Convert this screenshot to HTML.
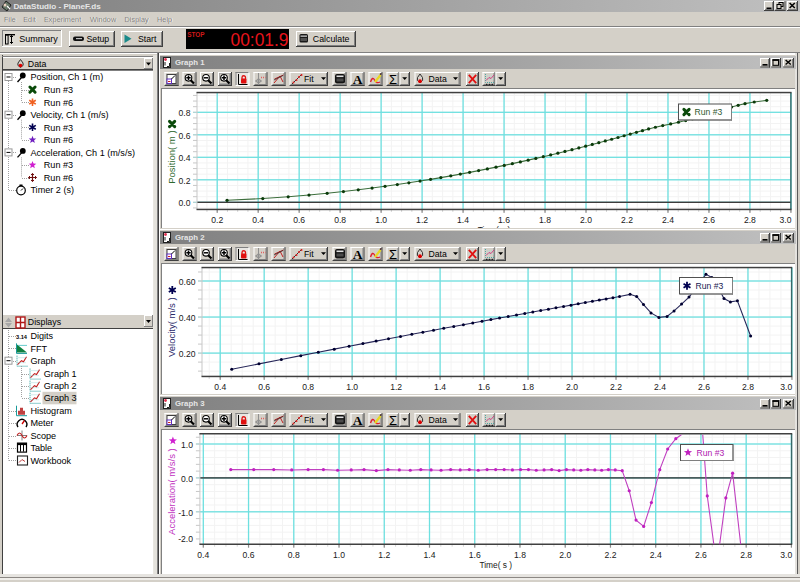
<!DOCTYPE html><html><head><meta charset="utf-8"><style>html,body{margin:0;padding:0;width:800px;height:582px;overflow:hidden;background:#d4d0c8}</style></head><body><svg width="800" height="582" viewBox="0 0 800 582" style="position:absolute;left:0;top:0;font-family:'Liberation Sans', sans-serif">
<defs>
<linearGradient id="tg" x1="0" y1="0" x2="1" y2="0"><stop offset="0" stop-color="#808080"/><stop offset="1" stop-color="#c0c0c0"/></linearGradient>
<linearGradient id="tg2" x1="0" y1="0" x2="1" y2="0"><stop offset="0" stop-color="#808080"/><stop offset="1" stop-color="#c0c0c0"/></linearGradient>
</defs>
<rect x="0" y="0" width="800" height="582" fill="#d4d0c8" />
<rect x="0" y="0" width="800" height="12" fill="url(#tg)" />
<text x="13.5" y="9" font-size="8.1" fill="#e6e6e6" font-weight="700" text-anchor="start" >DataStudio - PlaneF.ds</text>
<g transform="translate(1,0)"><path d="M5 1 L10 5 L6 11 L1 7 Z" fill="#6a7a6a" stroke="#202020" stroke-width="1"/><circle cx="4" cy="5" r="1.5" fill="#e8d0c0"/><path d="M6 6 L9 9" stroke="#ffffff" stroke-width="1.2"/></g>
<rect x="764" y="1" width="10" height="10" fill="#d4d0c8" />
<rect x="764" y="1" width="10" height="1" fill="#ffffff"/>
<rect x="764" y="1" width="1" height="10" fill="#ffffff"/>
<rect x="764" y="10" width="10" height="1" fill="#404040"/>
<rect x="773" y="1" width="1" height="10" fill="#404040"/>
<rect x="765" y="9" width="8" height="1" fill="#808080"/>
<rect x="772" y="2" width="1" height="8" fill="#808080"/>
<rect x="766.5" y="7.5" width="5" height="1.6" fill="#000" />
<rect x="774.5" y="1" width="11" height="10" fill="#d4d0c8" />
<rect x="774.5" y="1" width="11.0" height="1" fill="#ffffff"/>
<rect x="774.5" y="1" width="1" height="10" fill="#ffffff"/>
<rect x="774.5" y="10" width="11.0" height="1" fill="#404040"/>
<rect x="784.5" y="1" width="1" height="10" fill="#404040"/>
<rect x="775.5" y="9" width="9.0" height="1" fill="#808080"/>
<rect x="783.5" y="2" width="1" height="8" fill="#808080"/>
<rect x="779.0" y="2.5" width="4" height="4" fill="none" stroke="#000" stroke-width="1"/>
<rect x="777.0" y="4.5" width="4" height="4" fill="#d4d0c8" stroke="#000" stroke-width="1"/>
<rect x="787" y="1" width="11" height="10" fill="#d4d0c8" />
<rect x="787" y="1" width="11" height="1" fill="#ffffff"/>
<rect x="787" y="1" width="1" height="10" fill="#ffffff"/>
<rect x="787" y="10" width="11" height="1" fill="#404040"/>
<rect x="797" y="1" width="1" height="10" fill="#404040"/>
<rect x="788" y="9" width="9" height="1" fill="#808080"/>
<rect x="796" y="2" width="1" height="8" fill="#808080"/>
<path d="M789.6 3 L794.8 8 M794.8 3 L789.6 8" stroke="#000" stroke-width="1.5"/>
<text x="4.6" y="22.4" font-size="7.4" fill="#ffffff" font-weight="400" text-anchor="start" >File</text>
<text x="4" y="21.8" font-size="7.4" fill="#7e7c78" font-weight="400" text-anchor="start" >File</text>
<text x="23.8" y="22.4" font-size="7.4" fill="#ffffff" font-weight="400" text-anchor="start" >Edit</text>
<text x="23.2" y="21.8" font-size="7.4" fill="#7e7c78" font-weight="400" text-anchor="start" >Edit</text>
<text x="44.5" y="22.4" font-size="7.4" fill="#ffffff" font-weight="400" text-anchor="start" >Experiment</text>
<text x="43.9" y="21.8" font-size="7.4" fill="#7e7c78" font-weight="400" text-anchor="start" >Experiment</text>
<text x="90.6" y="22.4" font-size="7.4" fill="#ffffff" font-weight="400" text-anchor="start" >Window</text>
<text x="90" y="21.8" font-size="7.4" fill="#7e7c78" font-weight="400" text-anchor="start" >Window</text>
<text x="125.1" y="22.4" font-size="7.4" fill="#ffffff" font-weight="400" text-anchor="start" >Display</text>
<text x="124.5" y="21.8" font-size="7.4" fill="#7e7c78" font-weight="400" text-anchor="start" >Display</text>
<text x="157.6" y="22.4" font-size="7.4" fill="#ffffff" font-weight="400" text-anchor="start" >Help</text>
<text x="157" y="21.8" font-size="7.4" fill="#7e7c78" font-weight="400" text-anchor="start" >Help</text>
<rect x="0" y="26" width="800" height="1" fill="#808080"/>
<rect x="0" y="27" width="800" height="1" fill="#ffffff"/>
<rect x="2" y="30" width="60" height="17" fill="#dedbd4" />
<rect x="2" y="30" width="60" height="1" fill="#808080"/>
<rect x="2" y="30" width="1" height="17" fill="#808080"/>
<rect x="2" y="46" width="60" height="1" fill="#ffffff"/>
<rect x="61" y="30" width="1" height="17" fill="#ffffff"/>
<rect x="3" y="31" width="58" height="0.0" fill="#404040"/>
<g><rect x="5" y="34" width="10" height="1.4" fill="#000"/><rect x="5.5" y="35" width="2.6" height="9" fill="none" stroke="#000" stroke-width="1"/><path d="M11.5 35.5 V43.5 M10 37 L11.5 35.5 L13 37 M10 42 L11.5 43.5 L13 42" stroke="#000" stroke-width="1" fill="none"/></g>
<text x="19.3" y="42.2" font-size="9" fill="#000" font-weight="400" text-anchor="start" >Summary</text>
<rect x="69" y="31" width="46" height="16" fill="#d4d0c8" />
<rect x="69" y="31" width="46" height="1" fill="#ffffff"/>
<rect x="69" y="31" width="1" height="16" fill="#ffffff"/>
<rect x="69" y="46" width="46" height="1" fill="#404040"/>
<rect x="114" y="31" width="1" height="16" fill="#404040"/>
<rect x="70" y="45" width="44" height="1" fill="#808080"/>
<rect x="113" y="32" width="1" height="14" fill="#808080"/>
<rect x="73" y="36.5" width="11" height="4.5" rx="2" fill="#101010"/><rect x="76" y="38" width="6" height="1.2" fill="#c0c0c0"/>
<text x="86.5" y="42" font-size="8.7" fill="#000" font-weight="400" text-anchor="start" >Setup</text>
<rect x="121" y="31" width="42" height="16" fill="#d4d0c8" />
<rect x="121" y="31" width="42" height="1" fill="#ffffff"/>
<rect x="121" y="31" width="1" height="16" fill="#ffffff"/>
<rect x="121" y="46" width="42" height="1" fill="#404040"/>
<rect x="162" y="31" width="1" height="16" fill="#404040"/>
<rect x="122" y="45" width="40" height="1" fill="#808080"/>
<rect x="161" y="32" width="1" height="14" fill="#808080"/>
<path d="M124.5 34.5 L131.5 38.8 L124.5 43 Z" fill="#1a8a8a"/>
<text x="138" y="42" font-size="8.7" fill="#000" font-weight="400" text-anchor="start" >Start</text>
<rect x="186" y="29" width="103" height="20" fill="#000000" />
<text x="187.3" y="37.3" font-size="6.4" fill="#d01818" font-weight="700" text-anchor="start" >STOP</text>
<text x="288.5" y="46" font-size="19" fill="#e8141c" font-weight="400" text-anchor="end" transform="" textLength="58" lengthAdjust="spacingAndGlyphs">00:01.9</text>
<rect x="296" y="31" width="60" height="16" fill="#d4d0c8" />
<rect x="296" y="31" width="60" height="1" fill="#ffffff"/>
<rect x="296" y="31" width="1" height="16" fill="#ffffff"/>
<rect x="296" y="46" width="60" height="1" fill="#404040"/>
<rect x="355" y="31" width="1" height="16" fill="#404040"/>
<rect x="297" y="45" width="58" height="1" fill="#808080"/>
<rect x="354" y="32" width="1" height="14" fill="#808080"/>
<rect x="299.5" y="34" width="8.5" height="8.5" rx="1.5" fill="#181818"/><rect x="300.5" y="35.5" width="6.5" height="1.3" fill="#c8c8c8"/><rect x="300.5" y="38" width="6.5" height="3" fill="#505050"/>
<text x="312.8" y="42" font-size="8.8" fill="#000" font-weight="400" text-anchor="start" >Calculate</text>
<rect x="0" y="52" width="800" height="1" fill="#808080"/>
<rect x="0" y="53" width="800" height="1" fill="#ffffff"/>
<rect x="2" y="55" width="1" height="523" fill="#404040"/>
<rect x="2" y="56" width="155" height="1" fill="#808080"/>
<rect x="3" y="57" width="150" height="13" fill="#d4d0c8" />
<rect x="3" y="57" width="150" height="1" fill="#ffffff"/>
<rect x="3" y="69" width="150" height="1" fill="#404040"/>
<rect x="3" y="70" width="150" height="1" fill="#808080"/>
<rect x="144" y="58" width="9" height="11" fill="#d4d0c8" />
<rect x="144" y="58" width="9" height="1" fill="#ffffff"/>
<rect x="144" y="58" width="1" height="11" fill="#ffffff"/>
<rect x="144" y="68" width="9" height="1" fill="#808080"/>
<rect x="152" y="58" width="1" height="11" fill="#808080"/>
<path d="M146 62.5 L151 62.5 L148.5 65.5 Z" fill="#000"/>
<path d="M20.5 59.5 L23 63 Q24.5 65.5 20.5 67.5 Q16.5 65.5 18 63 Z" fill="none" stroke="#303030" stroke-width="1"/><circle cx="20.5" cy="65.5" r="1.8" fill="#e00000"/>
<text x="27.8" y="67" font-size="8.8" fill="#000" font-weight="400" text-anchor="start" >Data</text>
<rect x="3" y="71" width="150" height="243" fill="#ffffff" />
<rect x="3" y="314" width="150" height="14" fill="#d4d0c8" />
<rect x="3" y="314" width="150" height="1" fill="#ffffff"/>
<rect x="3" y="328" width="150" height="1" fill="#404040"/>
<rect x="144" y="315" width="9" height="12" fill="#d4d0c8" />
<rect x="144" y="315" width="9" height="1" fill="#ffffff"/>
<rect x="144" y="315" width="1" height="12" fill="#ffffff"/>
<rect x="144" y="326" width="9" height="1" fill="#808080"/>
<rect x="152" y="315" width="1" height="12" fill="#808080"/>
<path d="M146 320 L151 320 L148.5 323 Z" fill="#000"/>
<path d="M5 322 L8.5 317.5 L12 322 Z M5 323 L8.5 327.5 L12 323 Z" fill="#a8a8a8"/>
<rect x="16" y="317" width="9" height="11" fill="#fff" stroke="#b01818" stroke-width="1.4"/><path d="M20.5 317 V328 M16 322.5 H25" stroke="#b01818" stroke-width="1.4"/>
<text x="27.8" y="325.2" font-size="8.8" fill="#000" font-weight="400" text-anchor="start" >Displays</text>
<rect x="3" y="329" width="150" height="245" fill="#ffffff" />
<rect x="153" y="55" width="4" height="523" fill="#e4e2dc" />
<rect x="0" y="574" width="157" height="1" fill="#d4d0c8"/>
<rect x="0" y="574" width="157" height="4" fill="#d4d0c8" />
<rect x="153" y="57" width="1" height="517" fill="#e8e6e0"/>
<rect x="2" y="577" width="155" height="1" fill="#808080"/>
<line x1="8.5" y1="77" x2="8.5" y2="190" stroke="#a0a0a0" stroke-width="1" stroke-dasharray="1 1"/>
<line x1="9" y1="77.5" x2="17" y2="77.5" stroke="#a0a0a0" stroke-width="1" stroke-dasharray="1 1"/>
<rect x="5.0" y="73.5" width="7" height="7" fill="#fff" stroke="#9a9a9a" stroke-width="1"/>
<rect x="6.5" y="76.5" width="4" height="1" fill="#000"/>
<path d="M17.5 82 L21.5 77.5" stroke="#000" stroke-width="1.3"/><circle cx="22.8" cy="75.5" r="2.9" fill="#000"/>
<text x="30.4" y="80.3" font-size="9.1" fill="#000" font-weight="400" text-anchor="start" >Position, Ch 1 (m)</text>
<line x1="21.5" y1="82" x2="21.5" y2="102.2" stroke="#a0a0a0" stroke-width="1" stroke-dasharray="1 1"/>
<line x1="22" y1="90.5" x2="29" y2="90.5" stroke="#a0a0a0" stroke-width="1" stroke-dasharray="1 1"/>
<path d="M29.9 87.0 L35.1 92.19999999999999 M35.1 87.0 L29.9 92.19999999999999" stroke="#0a4a0a" stroke-width="3" stroke-linecap="round"/>
<text x="43.8" y="92.89999999999999" font-size="9.1" fill="#000" font-weight="400" text-anchor="start" >Run #3</text>
<line x1="22" y1="102.5" x2="29" y2="102.5" stroke="#a0a0a0" stroke-width="1" stroke-dasharray="1 1"/>
<path d="M32.5 98.4 V106.0 M29.2 100.3 L35.8 104.10000000000001 M35.8 100.3 L29.2 104.10000000000001" stroke="#f06020" stroke-width="1.6"/>
<text x="43.8" y="105.5" font-size="9.1" fill="#000" font-weight="400" text-anchor="start" >Run #6</text>
<line x1="9" y1="115.5" x2="17" y2="115.5" stroke="#a0a0a0" stroke-width="1" stroke-dasharray="1 1"/>
<rect x="5.0" y="111.2" width="7" height="7" fill="#fff" stroke="#9a9a9a" stroke-width="1"/>
<rect x="6.5" y="114.2" width="4" height="1" fill="#000"/>
<path d="M17.5 119.7 L21.5 115.2" stroke="#000" stroke-width="1.3"/><circle cx="22.8" cy="113.2" r="2.9" fill="#000"/>
<text x="30.4" y="118.0" font-size="9.1" fill="#000" font-weight="400" text-anchor="start" >Velocity, Ch 1 (m/s)</text>
<line x1="21.5" y1="119.7" x2="21.5" y2="139.8" stroke="#a0a0a0" stroke-width="1" stroke-dasharray="1 1"/>
<line x1="22" y1="127.5" x2="29" y2="127.5" stroke="#a0a0a0" stroke-width="1" stroke-dasharray="1 1"/>
<path d="M32.5 123.5 V131.1 M29.2 125.39999999999999 L35.8 129.2 M35.8 125.39999999999999 L29.2 129.2" stroke="#000050" stroke-width="1.6"/>
<text x="43.8" y="130.6" font-size="9.1" fill="#000" font-weight="400" text-anchor="start" >Run #3</text>
<line x1="22" y1="140.5" x2="29" y2="140.5" stroke="#a0a0a0" stroke-width="1" stroke-dasharray="1 1"/>
<polygon points="32.50,135.80 33.50,138.42 36.30,138.56 34.12,140.33 34.85,143.04 32.50,141.50 30.15,143.04 30.88,140.33 28.70,138.56 31.50,138.42" fill="#7020c0"/>
<text x="43.8" y="143.10000000000002" font-size="9.1" fill="#000" font-weight="400" text-anchor="start" >Run #6</text>
<line x1="9" y1="152.5" x2="17" y2="152.5" stroke="#a0a0a0" stroke-width="1" stroke-dasharray="1 1"/>
<rect x="5.0" y="148.9" width="7" height="7" fill="#fff" stroke="#9a9a9a" stroke-width="1"/>
<rect x="6.5" y="151.9" width="4" height="1" fill="#000"/>
<path d="M17.5 157.4 L21.5 152.9" stroke="#000" stroke-width="1.3"/><circle cx="22.8" cy="150.9" r="2.9" fill="#000"/>
<text x="30.4" y="155.70000000000002" font-size="9.1" fill="#000" font-weight="400" text-anchor="start" >Acceleration, Ch 1 (m/s/s)</text>
<line x1="21.5" y1="157.4" x2="21.5" y2="177.5" stroke="#a0a0a0" stroke-width="1" stroke-dasharray="1 1"/>
<line x1="22" y1="165.5" x2="29" y2="165.5" stroke="#a0a0a0" stroke-width="1" stroke-dasharray="1 1"/>
<polygon points="32.50,161.00 33.50,163.62 36.30,163.76 34.12,165.53 34.85,168.24 32.50,166.70 30.15,168.24 30.88,165.53 28.70,163.76 31.50,163.62" fill="#d020d0"/>
<text x="43.8" y="168.3" font-size="9.1" fill="#000" font-weight="400" text-anchor="start" >Run #3</text>
<line x1="22" y1="178.5" x2="29" y2="178.5" stroke="#a0a0a0" stroke-width="1" stroke-dasharray="1 1"/>
<path d="M32.5 173.5 V181.5 M28.5 177.5 H36.5" stroke="#701010" stroke-width="1.2"/><path d="M31.0 175.0 L32.5 173.5 L34.0 175.0 M31.0 180.0 L32.5 181.5 L34.0 180.0 M30.0 176.0 L28.5 177.5 L30.0 179.0 M35.0 176.0 L36.5 177.5 L35.0 179.0" stroke="#701010" stroke-width="1" fill="none"/>
<text x="43.8" y="180.8" font-size="9.1" fill="#000" font-weight="400" text-anchor="start" >Run #6</text>
<line x1="9" y1="190.5" x2="17" y2="190.5" stroke="#a0a0a0" stroke-width="1" stroke-dasharray="1 1"/>
<circle cx="21" cy="190.5" r="4.3" fill="#fff" stroke="#000" stroke-width="1.2"/><path d="M21 190.5 L23 188.5" stroke="#000" stroke-width="1"/><rect x="19.5" y="184.5" width="3" height="1.5" fill="#000"/>
<text x="30.4" y="193.3" font-size="9.1" fill="#000" font-weight="400" text-anchor="start" >Timer 2 (s)</text>
<line x1="8.5" y1="330" x2="8.5" y2="460.5" stroke="#a0a0a0" stroke-width="1" stroke-dasharray="1 1"/>
<line x1="9" y1="336.5" x2="16" y2="336.5" stroke="#a0a0a0" stroke-width="1" stroke-dasharray="1 1"/>
<text x="16" y="338.5" font-size="6" fill="#000" font-weight="700" text-anchor="start" textLength="11" lengthAdjust="spacingAndGlyphs">3.14</text>
<text x="30.4" y="339.3" font-size="9.1" fill="#000" font-weight="400" text-anchor="start" >Digits</text>
<line x1="9" y1="348.5" x2="16" y2="348.5" stroke="#a0a0a0" stroke-width="1" stroke-dasharray="1 1"/>
<path d="M17 344.4 L27 352.4 L17 352.4 Z" fill="#108040"/><path d="M16.5 343.4 V353.4 H27" stroke="#1a9a9a" stroke-width="1" fill="none"/><path d="M18 345.4 H27" stroke="#40c0c0" stroke-width="0.8"/>
<text x="30.4" y="351.7" font-size="9.1" fill="#000" font-weight="400" text-anchor="start" >FFT</text>
<line x1="9" y1="361.5" x2="16" y2="361.5" stroke="#a0a0a0" stroke-width="1" stroke-dasharray="1 1"/>
<rect x="5.0" y="357.2" width="7" height="7" fill="#fff" stroke="#9a9a9a" stroke-width="1"/>
<rect x="6.5" y="360.2" width="4" height="1" fill="#000"/>
<path d="M17.0 355.7 V366.2 H27.5" stroke="#1a9a9a" stroke-width="1" fill="none" stroke-dasharray="1 1"/><path d="M17.5 364.7 L21.5 360.7 L23.5 361.7 L26.5 356.7" stroke="#c02020" stroke-width="1.1" fill="none"/><path d="M18.5 357.7 H26.5 M18.5 362.7 H26.5" stroke="#90d0d0" stroke-width="0.8" stroke-dasharray="1 1"/>
<text x="30.4" y="364.0" font-size="9.1" fill="#000" font-weight="400" text-anchor="start" >Graph</text>
<line x1="22" y1="374.5" x2="29" y2="374.5" stroke="#a0a0a0" stroke-width="1" stroke-dasharray="1 1"/>
<path d="M30.0 368.6 V379.1 H40.5" stroke="#1a9a9a" stroke-width="1" fill="none" stroke-dasharray="1 1"/><path d="M30.5 377.6 L34.5 373.6 L36.5 374.6 L39.5 369.6" stroke="#c02020" stroke-width="1.1" fill="none"/><path d="M31.5 370.6 H39.5 M31.5 375.6 H39.5" stroke="#90d0d0" stroke-width="0.8" stroke-dasharray="1 1"/>
<text x="43.8" y="376.90000000000003" font-size="9.1" fill="#000" font-weight="400" text-anchor="start" >Graph 1</text>
<line x1="22" y1="386.5" x2="29" y2="386.5" stroke="#a0a0a0" stroke-width="1" stroke-dasharray="1 1"/>
<path d="M30.0 380.7 V391.2 H40.5" stroke="#1a9a9a" stroke-width="1" fill="none" stroke-dasharray="1 1"/><path d="M30.5 389.7 L34.5 385.7 L36.5 386.7 L39.5 381.7" stroke="#c02020" stroke-width="1.1" fill="none"/><path d="M31.5 382.7 H39.5 M31.5 387.7 H39.5" stroke="#90d0d0" stroke-width="0.8" stroke-dasharray="1 1"/>
<text x="43.8" y="389.0" font-size="9.1" fill="#000" font-weight="400" text-anchor="start" >Graph 2</text>
<line x1="22" y1="398.5" x2="29" y2="398.5" stroke="#a0a0a0" stroke-width="1" stroke-dasharray="1 1"/>
<rect x="42.5" y="391.8" width="34" height="12.5" fill="#d4d0c8" />
<path d="M30.0 392.8 V403.3 H40.5" stroke="#1a9a9a" stroke-width="1" fill="none" stroke-dasharray="1 1"/><path d="M30.5 401.8 L34.5 397.8 L36.5 398.8 L39.5 393.8" stroke="#c02020" stroke-width="1.1" fill="none"/><path d="M31.5 394.8 H39.5 M31.5 399.8 H39.5" stroke="#90d0d0" stroke-width="0.8" stroke-dasharray="1 1"/>
<text x="43.8" y="401.1" font-size="9.1" fill="#000" font-weight="400" text-anchor="start" >Graph 3</text>
<line x1="9" y1="411.5" x2="16" y2="411.5" stroke="#a0a0a0" stroke-width="1" stroke-dasharray="1 1"/>
<path d="M18 414.7 V410.7 H20 V407.7 H23 V410.7 H25 V414.7 Z" fill="#c04040"/><path d="M16.5 405.7 V415.7 H27" stroke="#1a9a9a" stroke-width="1" fill="none"/>
<text x="30.4" y="414.0" font-size="9.1" fill="#000" font-weight="400" text-anchor="start" >Histogram</text>
<line x1="9" y1="423.5" x2="16" y2="423.5" stroke="#a0a0a0" stroke-width="1" stroke-dasharray="1 1"/>
<path d="M18 427 A4.8 4.8 0 1 1 26 427" stroke="#000" stroke-width="1.4" fill="none"/><path d="M22 424 L24.5 420.5" stroke="#d00000" stroke-width="1.3"/>
<text x="30.4" y="426.3" font-size="9.1" fill="#000" font-weight="400" text-anchor="start" >Meter</text>
<line x1="9" y1="436.5" x2="16" y2="436.5" stroke="#a0a0a0" stroke-width="1" stroke-dasharray="1 1"/>
<path d="M22 430.5 V440.5 M17 435.5 H27" stroke="#808080" stroke-width="1"/><path d="M17 435.5 Q19.5 430.5 22 435.5 T27 435.5" stroke="#c02020" stroke-width="1.2" fill="none"/>
<text x="30.4" y="438.8" font-size="9.1" fill="#000" font-weight="400" text-anchor="start" >Scope</text>
<line x1="9" y1="448.5" x2="16" y2="448.5" stroke="#a0a0a0" stroke-width="1" stroke-dasharray="1 1"/>
<rect x="17.5" y="443.1" width="9" height="9" fill="#fff" stroke="#000" stroke-width="1.2"/><path d="M20.5 443.6 V451.6 M23.5 443.6 V451.6" stroke="#000" stroke-width="1"/><rect x="17.5" y="443.1" width="9" height="2" fill="#000"/>
<text x="30.4" y="450.90000000000003" font-size="9.1" fill="#000" font-weight="400" text-anchor="start" >Table</text>
<line x1="9" y1="460.5" x2="16" y2="460.5" stroke="#a0a0a0" stroke-width="1" stroke-dasharray="1 1"/>
<rect x="17.5" y="456.0" width="10" height="9" fill="#fff" stroke="#202020" stroke-width="1.1"/><path d="M19 462.5 L22 459.5 L25 461.5" stroke="#c04040" stroke-width="1" fill="none"/>
<text x="30.4" y="463.8" font-size="9.1" fill="#000" font-weight="400" text-anchor="start" >Workbook</text>
<line x1="21.5" y1="366" x2="21.5" y2="397.8" stroke="#a0a0a0" stroke-width="1" stroke-dasharray="1 1"/>
<rect x="157" y="53" width="1" height="178" fill="#808080"/>
<rect x="158" y="53" width="1" height="178" fill="#404040"/>
<rect x="159" y="53" width="1" height="178" fill="#ffffff"/>
<rect x="159" y="54" width="638" height="1" fill="#ffffff"/>
<rect x="797" y="53" width="1" height="178" fill="#5a5a5a"/>
<rect x="795" y="53" width="2" height="178" fill="#e4e2de"/>
<rect x="798" y="53" width="2" height="178" fill="#d4d0c8" />
<rect x="160" y="56" width="636" height="13" fill="url(#tg)" />
<text x="175" y="65.2" font-size="7.8" fill="#e6e6e6" font-weight="700" text-anchor="start" >Graph 1</text>
<rect x="163.5" y="57.5" width="7" height="10" fill="#fff" stroke="#202020" stroke-width="1"/><circle cx="165.5" cy="59.5" r="1.4" fill="#e03050"/><path d="M165 65.5 V62 M167 66.5 H169.5 V63" stroke="#202020" stroke-width="1" fill="none"/>
<rect x="760" y="58" width="10" height="9.5" fill="#d4d0c8" />
<rect x="760" y="58" width="10" height="1" fill="#ffffff"/>
<rect x="760" y="58" width="1" height="9.5" fill="#ffffff"/>
<rect x="760" y="66.5" width="10" height="1" fill="#404040"/>
<rect x="769" y="58" width="1" height="9.5" fill="#404040"/>
<rect x="761" y="65.5" width="8" height="1" fill="#808080"/>
<rect x="768" y="59" width="1" height="7.5" fill="#808080"/>
<rect x="762.5" y="64.0" width="5" height="1.6" fill="#000" />
<rect x="771" y="58" width="10" height="9.5" fill="#d4d0c8" />
<rect x="771" y="58" width="10" height="1" fill="#ffffff"/>
<rect x="771" y="58" width="1" height="9.5" fill="#ffffff"/>
<rect x="771" y="66.5" width="10" height="1" fill="#404040"/>
<rect x="780" y="58" width="1" height="9.5" fill="#404040"/>
<rect x="772" y="65.5" width="8" height="1" fill="#808080"/>
<rect x="779" y="59" width="1" height="7.5" fill="#808080"/>
<rect x="773" y="59.8" width="5.5" height="5.5" fill="none" stroke="#000" stroke-width="1"/>
<rect x="772.5" y="59.3" width="6.5" height="1.6" fill="#000"/>
<rect x="783" y="58" width="11" height="9.5" fill="#d4d0c8" />
<rect x="783" y="58" width="11" height="1" fill="#ffffff"/>
<rect x="783" y="58" width="1" height="9.5" fill="#ffffff"/>
<rect x="783" y="66.5" width="11" height="1" fill="#404040"/>
<rect x="793" y="58" width="1" height="9.5" fill="#404040"/>
<rect x="784" y="65.5" width="9" height="1" fill="#808080"/>
<rect x="792" y="59" width="1" height="7.5" fill="#808080"/>
<path d="M785.6 60 L790.8 64.5 M790.8 60 L785.6 64.5" stroke="#000" stroke-width="1.5"/>
<rect x="164.5" y="72" width="14" height="14" fill="#d4d0c8" />
<rect x="164.5" y="72" width="14.0" height="1" fill="#ffffff"/>
<rect x="164.5" y="72" width="1" height="14" fill="#ffffff"/>
<rect x="164.5" y="85" width="14.0" height="1" fill="#404040"/>
<rect x="177.5" y="72" width="1" height="14" fill="#404040"/>
<rect x="165.5" y="84" width="12.0" height="1" fill="#808080"/>
<rect x="176.5" y="73" width="1" height="12" fill="#808080"/>
<rect x="167" y="74.5" width="9" height="9" fill="#fff" stroke="#404040" stroke-width="1"/><rect x="167" y="79" width="4.5" height="4.5" fill="#fff" stroke="#6030c0" stroke-width="1"/><path d="M168 81.5 H170.5" stroke="#d02020" stroke-width="1"/><path d="M171.5 79 L175 75.5" stroke="#000" stroke-width="1"/>
<rect x="182.5" y="72" width="14" height="14" fill="#d4d0c8" />
<rect x="182.5" y="72" width="14.0" height="1" fill="#ffffff"/>
<rect x="182.5" y="72" width="1" height="14" fill="#ffffff"/>
<rect x="182.5" y="85" width="14.0" height="1" fill="#404040"/>
<rect x="195.5" y="72" width="1" height="14" fill="#404040"/>
<rect x="183.5" y="84" width="12.0" height="1" fill="#808080"/>
<rect x="194.5" y="73" width="1" height="12" fill="#808080"/>
<circle cx="188.5" cy="77.8" r="3.3" fill="#fff" stroke="#000" stroke-width="1.1"/><path d="M190.7 80.2 L194.0 83.5" stroke="#000" stroke-width="2.2"/>
<path d="M186.3 77.8 H190.7 M188.5 75.6 V80" stroke="#000" stroke-width="1.5"/>
<rect x="200" y="72" width="14" height="14" fill="#d4d0c8" />
<rect x="200" y="72" width="14" height="1" fill="#ffffff"/>
<rect x="200" y="72" width="1" height="14" fill="#ffffff"/>
<rect x="200" y="85" width="14" height="1" fill="#404040"/>
<rect x="213" y="72" width="1" height="14" fill="#404040"/>
<rect x="201" y="84" width="12" height="1" fill="#808080"/>
<rect x="212" y="73" width="1" height="12" fill="#808080"/>
<circle cx="206" cy="77.8" r="3.3" fill="#fff" stroke="#000" stroke-width="1.1"/><path d="M208.2 80.2 L211.5 83.5" stroke="#000" stroke-width="2.2"/>
<path d="M203.8 77.8 H208.2" stroke="#000" stroke-width="1.5"/>
<rect x="218" y="72" width="14" height="14" fill="#d4d0c8" />
<rect x="218" y="72" width="14" height="1" fill="#ffffff"/>
<rect x="218" y="72" width="1" height="14" fill="#ffffff"/>
<rect x="218" y="85" width="14" height="1" fill="#404040"/>
<rect x="231" y="72" width="1" height="14" fill="#404040"/>
<rect x="219" y="84" width="12" height="1" fill="#808080"/>
<rect x="230" y="73" width="1" height="12" fill="#808080"/>
<rect x="219.5" y="73.5" width="10" height="10" fill="none" stroke="#a0a0a0" stroke-width="0.8"/>
<circle cx="224" cy="77.8" r="3.3" fill="#fff" stroke="#000" stroke-width="1.1"/><path d="M226.2 80.2 L229.5 83.5" stroke="#000" stroke-width="2.2"/>
<path d="M221.8 77.8 H226.2 M224 75.6 V80" stroke="#000" stroke-width="1.5"/>
<rect x="235.5" y="72" width="14" height="14" fill="#e8e6e2" />
<rect x="235.5" y="72" width="14.0" height="1" fill="#808080"/>
<rect x="235.5" y="72" width="1" height="14" fill="#808080"/>
<rect x="235.5" y="85" width="14.0" height="1" fill="#ffffff"/>
<rect x="248.5" y="72" width="1" height="14" fill="#ffffff"/>
<path d="M238.5 74 V84.5 H247.5" stroke="#000" stroke-width="1" fill="none"/><rect x="241" y="78.5" width="5.5" height="5" rx="1" fill="#e01010"/><path d="M242 79 V77.5 A1.75 1.75 0 0 1 245.5 77.5 V79" stroke="#e01010" stroke-width="1.3" fill="none"/>
<rect x="253.5" y="72" width="14" height="14" fill="#d4d0c8" />
<rect x="253.5" y="72" width="14.0" height="1" fill="#ffffff"/>
<rect x="253.5" y="72" width="1" height="14" fill="#ffffff"/>
<rect x="253.5" y="85" width="14.0" height="1" fill="#404040"/>
<rect x="266.5" y="72" width="1" height="14" fill="#404040"/>
<rect x="254.5" y="84" width="12.0" height="1" fill="#808080"/>
<rect x="265.5" y="73" width="1" height="12" fill="#808080"/>
<path d="M258.5 73 V85 M255 81 H262" stroke="#909090" stroke-width="1"/><circle cx="258.5" cy="81" r="2" fill="none" stroke="#909090" stroke-width="1"/><path d="M261 77.5 H265.5" stroke="#e06060" stroke-width="1.4" stroke-dasharray="1 1"/>
<rect x="271.5" y="72" width="14" height="14" fill="#d4d0c8" />
<rect x="271.5" y="72" width="14.0" height="1" fill="#ffffff"/>
<rect x="271.5" y="72" width="1" height="14" fill="#ffffff"/>
<rect x="271.5" y="85" width="14.0" height="1" fill="#404040"/>
<rect x="284.5" y="72" width="1" height="14" fill="#404040"/>
<rect x="272.5" y="84" width="12.0" height="1" fill="#808080"/>
<rect x="283.5" y="73" width="1" height="12" fill="#808080"/>
<path d="M274 83 L280 76 L283 82 M274.5 79 L283.5 75" stroke="#c02020" stroke-width="1" fill="none"/><path d="M274 80 L283 75.5" stroke="#303030" stroke-width="0.8"/>
<rect x="289.5" y="72" width="38.5" height="14" fill="#d4d0c8" />
<rect x="289.5" y="72" width="38.5" height="1" fill="#ffffff"/>
<rect x="289.5" y="72" width="1" height="14" fill="#ffffff"/>
<rect x="289.5" y="85" width="38.5" height="1" fill="#404040"/>
<rect x="327.0" y="72" width="1" height="14" fill="#404040"/>
<rect x="290.5" y="84" width="36.5" height="1" fill="#808080"/>
<rect x="326.0" y="73" width="1" height="12" fill="#808080"/>
<path d="M292 84 L302 74" stroke="#303030" stroke-width="1"/><circle cx="293.5" cy="82.5" r="1" fill="#e02020"/><circle cx="296.5" cy="80" r="1" fill="#e02020"/><circle cx="299" cy="77" r="1" fill="#e02020"/><circle cx="301.5" cy="75" r="1" fill="#e02020"/>
<text x="304" y="82.3" font-size="8.7" fill="#000" font-weight="400" text-anchor="start" >Fit</text>
<path d="M321.0 77.3 H326.0 L323.5 80.0 Z" fill="#000"/>
<rect x="332.5" y="72" width="14" height="14" fill="#d4d0c8" />
<rect x="332.5" y="72" width="14.0" height="1" fill="#ffffff"/>
<rect x="332.5" y="72" width="1" height="14" fill="#ffffff"/>
<rect x="332.5" y="85" width="14.0" height="1" fill="#404040"/>
<rect x="345.5" y="72" width="1" height="14" fill="#404040"/>
<rect x="333.5" y="84" width="12.0" height="1" fill="#808080"/>
<rect x="344.5" y="73" width="1" height="12" fill="#808080"/>
<rect x="335" y="74" width="10" height="9.5" rx="2" fill="#141414"/><rect x="336.5" y="75.5" width="7" height="1.6" fill="#e0e0e0"/><rect x="336.5" y="78.5" width="7" height="3" fill="#4a4a4a"/>
<rect x="350.5" y="72" width="14" height="14" fill="#d4d0c8" />
<rect x="350.5" y="72" width="14.0" height="1" fill="#ffffff"/>
<rect x="350.5" y="72" width="1" height="14" fill="#ffffff"/>
<rect x="350.5" y="85" width="14.0" height="1" fill="#404040"/>
<rect x="363.5" y="72" width="1" height="14" fill="#404040"/>
<rect x="351.5" y="84" width="12.0" height="1" fill="#808080"/>
<rect x="362.5" y="73" width="1" height="12" fill="#808080"/>
<text x="357.5" y="84.2" font-size="13.5" fill="#000" font-weight="700" text-anchor="middle" font-family="Liberation Serif">A</text>
<rect x="368.5" y="72" width="14" height="14" fill="#d4d0c8" />
<rect x="368.5" y="72" width="14.0" height="1" fill="#ffffff"/>
<rect x="368.5" y="72" width="1" height="14" fill="#ffffff"/>
<rect x="368.5" y="85" width="14.0" height="1" fill="#404040"/>
<rect x="381.5" y="72" width="1" height="14" fill="#404040"/>
<rect x="369.5" y="84" width="12.0" height="1" fill="#808080"/>
<rect x="380.5" y="73" width="1" height="12" fill="#808080"/>
<path d="M370.5 82 Q372.5 76 374.5 80 T380 82" stroke="#e02030" stroke-width="1.4" fill="none"/><path d="M375 82 L380.5 75" stroke="#e8d820" stroke-width="2.2"/><path d="M380 74.5 L381.5 73.5" stroke="#402020" stroke-width="1.5"/>
<rect x="386.5" y="72" width="13" height="14" fill="#d4d0c8" />
<rect x="386.5" y="72" width="13.0" height="1" fill="#ffffff"/>
<rect x="386.5" y="72" width="1" height="14" fill="#ffffff"/>
<rect x="386.5" y="85" width="13.0" height="1" fill="#404040"/>
<rect x="398.5" y="72" width="1" height="14" fill="#404040"/>
<rect x="387.5" y="84" width="11.0" height="1" fill="#808080"/>
<rect x="397.5" y="73" width="1" height="12" fill="#808080"/>
<text x="393" y="84" font-size="13" fill="#000" font-weight="400" text-anchor="middle" >Σ</text>
<rect x="399.5" y="72" width="10.5" height="14" fill="#d4d0c8" />
<rect x="399.5" y="72" width="10.5" height="1" fill="#ffffff"/>
<rect x="399.5" y="72" width="1" height="14" fill="#ffffff"/>
<rect x="399.5" y="85" width="10.5" height="1" fill="#404040"/>
<rect x="409.0" y="72" width="1" height="14" fill="#404040"/>
<rect x="400.5" y="84" width="8.5" height="1" fill="#808080"/>
<rect x="408.0" y="73" width="1" height="12" fill="#808080"/>
<path d="M402.2 77.3 H407.2 L404.7 80.0 Z" fill="#000"/>
<rect x="414.5" y="72" width="46" height="14" fill="#d4d0c8" />
<rect x="414.5" y="72" width="46.0" height="1" fill="#ffffff"/>
<rect x="414.5" y="72" width="1" height="14" fill="#ffffff"/>
<rect x="414.5" y="85" width="46.0" height="1" fill="#404040"/>
<rect x="459.5" y="72" width="1" height="14" fill="#404040"/>
<rect x="415.5" y="84" width="44.0" height="1" fill="#808080"/>
<rect x="458.5" y="73" width="1" height="12" fill="#808080"/>
<path d="M420 74 L422.5 77.5 Q424 80.5 420 83 Q416 80.5 417.5 77.5 Z" fill="none" stroke="#303030" stroke-width="1"/><circle cx="420" cy="81.2" r="1.9" fill="#e00000"/>
<text x="428.5" y="82.3" font-size="8.7" fill="#000" font-weight="400" text-anchor="start" >Data</text>
<path d="M453.0 77.3 H458.0 L455.5 80.0 Z" fill="#000"/>
<rect x="466" y="72" width="13" height="14" fill="#d4d0c8" />
<rect x="466" y="72" width="13" height="1" fill="#ffffff"/>
<rect x="466" y="72" width="1" height="14" fill="#ffffff"/>
<rect x="466" y="85" width="13" height="1" fill="#404040"/>
<rect x="478" y="72" width="1" height="14" fill="#404040"/>
<rect x="467" y="84" width="11" height="1" fill="#808080"/>
<rect x="477" y="73" width="1" height="12" fill="#808080"/>
<path d="M468.8 74.8 L476.2 83.2 M476.2 74.8 L468.8 83.2" stroke="#e01010" stroke-width="1.8"/>
<rect x="482.5" y="72" width="13" height="14" fill="#d4d0c8" />
<rect x="482.5" y="72" width="13.0" height="1" fill="#ffffff"/>
<rect x="482.5" y="72" width="1" height="14" fill="#ffffff"/>
<rect x="482.5" y="85" width="13.0" height="1" fill="#404040"/>
<rect x="494.5" y="72" width="1" height="14" fill="#404040"/>
<rect x="483.5" y="84" width="11.0" height="1" fill="#808080"/>
<rect x="493.5" y="73" width="1" height="12" fill="#808080"/>
<path d="M485.5 74 V82.5 H494" stroke="#40a0a0" stroke-width="0.9" fill="none" stroke-dasharray="1 1"/><path d="M487 76 H494 M487 79 H494" stroke="#a0d8d8" stroke-width="0.7" stroke-dasharray="1 1"/><path d="M486 80.5 L489 77.5 L491 78.5 L494 75" stroke="#d04080" stroke-width="1" fill="none"/><path d="M486 84.3 H494.5" stroke="#202020" stroke-width="1.3" stroke-dasharray="1.4 1.4"/>
<rect x="495.5" y="72" width="10.5" height="14" fill="#d4d0c8" />
<rect x="495.5" y="72" width="10.5" height="1" fill="#ffffff"/>
<rect x="495.5" y="72" width="1" height="14" fill="#ffffff"/>
<rect x="495.5" y="85" width="10.5" height="1" fill="#404040"/>
<rect x="505.0" y="72" width="1" height="14" fill="#404040"/>
<rect x="496.5" y="84" width="8.5" height="1" fill="#808080"/>
<rect x="504.0" y="73" width="1" height="12" fill="#808080"/>
<path d="M498.2 77.3 H503.2 L500.7 80.0 Z" fill="#000"/>
<rect x="161" y="88" width="634" height="1" fill="#808080"/>
<rect x="161" y="88" width="1" height="140" fill="#808080"/>
<rect x="162" y="89" width="633" height="0.0" fill="#404040"/>
<rect x="162" y="89" width="633" height="139" fill="#ffffff" />
<rect x="157" y="228" width="1" height="169" fill="#808080"/>
<rect x="158" y="228" width="1" height="169" fill="#404040"/>
<rect x="159" y="228" width="1" height="169" fill="#ffffff"/>
<rect x="159" y="229" width="638" height="1" fill="#ffffff"/>
<rect x="797" y="228" width="1" height="169" fill="#5a5a5a"/>
<rect x="795" y="228" width="2" height="169" fill="#e4e2de"/>
<rect x="798" y="228" width="2" height="169" fill="#d4d0c8" />
<rect x="160" y="231" width="636" height="13" fill="url(#tg)" />
<text x="175" y="240.2" font-size="7.8" fill="#e6e6e6" font-weight="700" text-anchor="start" >Graph 2</text>
<rect x="163.5" y="232.5" width="7" height="10" fill="#fff" stroke="#202020" stroke-width="1"/><circle cx="165.5" cy="234.5" r="1.4" fill="#e03050"/><path d="M165 240.5 V237 M167 241.5 H169.5 V238" stroke="#202020" stroke-width="1" fill="none"/>
<rect x="760" y="233" width="10" height="9.5" fill="#d4d0c8" />
<rect x="760" y="233" width="10" height="1" fill="#ffffff"/>
<rect x="760" y="233" width="1" height="9.5" fill="#ffffff"/>
<rect x="760" y="241.5" width="10" height="1" fill="#404040"/>
<rect x="769" y="233" width="1" height="9.5" fill="#404040"/>
<rect x="761" y="240.5" width="8" height="1" fill="#808080"/>
<rect x="768" y="234" width="1" height="7.5" fill="#808080"/>
<rect x="762.5" y="239.0" width="5" height="1.6" fill="#000" />
<rect x="771" y="233" width="10" height="9.5" fill="#d4d0c8" />
<rect x="771" y="233" width="10" height="1" fill="#ffffff"/>
<rect x="771" y="233" width="1" height="9.5" fill="#ffffff"/>
<rect x="771" y="241.5" width="10" height="1" fill="#404040"/>
<rect x="780" y="233" width="1" height="9.5" fill="#404040"/>
<rect x="772" y="240.5" width="8" height="1" fill="#808080"/>
<rect x="779" y="234" width="1" height="7.5" fill="#808080"/>
<rect x="773" y="234.8" width="5.5" height="5.5" fill="none" stroke="#000" stroke-width="1"/>
<rect x="772.5" y="234.3" width="6.5" height="1.6" fill="#000"/>
<rect x="783" y="233" width="11" height="9.5" fill="#d4d0c8" />
<rect x="783" y="233" width="11" height="1" fill="#ffffff"/>
<rect x="783" y="233" width="1" height="9.5" fill="#ffffff"/>
<rect x="783" y="241.5" width="11" height="1" fill="#404040"/>
<rect x="793" y="233" width="1" height="9.5" fill="#404040"/>
<rect x="784" y="240.5" width="9" height="1" fill="#808080"/>
<rect x="792" y="234" width="1" height="7.5" fill="#808080"/>
<path d="M785.6 235 L790.8 239.5 M790.8 235 L785.6 239.5" stroke="#000" stroke-width="1.5"/>
<rect x="164.5" y="247" width="14" height="14" fill="#d4d0c8" />
<rect x="164.5" y="247" width="14.0" height="1" fill="#ffffff"/>
<rect x="164.5" y="247" width="1" height="14" fill="#ffffff"/>
<rect x="164.5" y="260" width="14.0" height="1" fill="#404040"/>
<rect x="177.5" y="247" width="1" height="14" fill="#404040"/>
<rect x="165.5" y="259" width="12.0" height="1" fill="#808080"/>
<rect x="176.5" y="248" width="1" height="12" fill="#808080"/>
<rect x="167" y="249.5" width="9" height="9" fill="#fff" stroke="#404040" stroke-width="1"/><rect x="167" y="254" width="4.5" height="4.5" fill="#fff" stroke="#6030c0" stroke-width="1"/><path d="M168 256.5 H170.5" stroke="#d02020" stroke-width="1"/><path d="M171.5 254 L175 250.5" stroke="#000" stroke-width="1"/>
<rect x="182.5" y="247" width="14" height="14" fill="#d4d0c8" />
<rect x="182.5" y="247" width="14.0" height="1" fill="#ffffff"/>
<rect x="182.5" y="247" width="1" height="14" fill="#ffffff"/>
<rect x="182.5" y="260" width="14.0" height="1" fill="#404040"/>
<rect x="195.5" y="247" width="1" height="14" fill="#404040"/>
<rect x="183.5" y="259" width="12.0" height="1" fill="#808080"/>
<rect x="194.5" y="248" width="1" height="12" fill="#808080"/>
<circle cx="188.5" cy="252.8" r="3.3" fill="#fff" stroke="#000" stroke-width="1.1"/><path d="M190.7 255.2 L194.0 258.5" stroke="#000" stroke-width="2.2"/>
<path d="M186.3 252.8 H190.7 M188.5 250.6 V255" stroke="#000" stroke-width="1.5"/>
<rect x="200" y="247" width="14" height="14" fill="#d4d0c8" />
<rect x="200" y="247" width="14" height="1" fill="#ffffff"/>
<rect x="200" y="247" width="1" height="14" fill="#ffffff"/>
<rect x="200" y="260" width="14" height="1" fill="#404040"/>
<rect x="213" y="247" width="1" height="14" fill="#404040"/>
<rect x="201" y="259" width="12" height="1" fill="#808080"/>
<rect x="212" y="248" width="1" height="12" fill="#808080"/>
<circle cx="206" cy="252.8" r="3.3" fill="#fff" stroke="#000" stroke-width="1.1"/><path d="M208.2 255.2 L211.5 258.5" stroke="#000" stroke-width="2.2"/>
<path d="M203.8 252.8 H208.2" stroke="#000" stroke-width="1.5"/>
<rect x="218" y="247" width="14" height="14" fill="#d4d0c8" />
<rect x="218" y="247" width="14" height="1" fill="#ffffff"/>
<rect x="218" y="247" width="1" height="14" fill="#ffffff"/>
<rect x="218" y="260" width="14" height="1" fill="#404040"/>
<rect x="231" y="247" width="1" height="14" fill="#404040"/>
<rect x="219" y="259" width="12" height="1" fill="#808080"/>
<rect x="230" y="248" width="1" height="12" fill="#808080"/>
<rect x="219.5" y="248.5" width="10" height="10" fill="none" stroke="#a0a0a0" stroke-width="0.8"/>
<circle cx="224" cy="252.8" r="3.3" fill="#fff" stroke="#000" stroke-width="1.1"/><path d="M226.2 255.2 L229.5 258.5" stroke="#000" stroke-width="2.2"/>
<path d="M221.8 252.8 H226.2 M224 250.6 V255" stroke="#000" stroke-width="1.5"/>
<rect x="235.5" y="247" width="14" height="14" fill="#e8e6e2" />
<rect x="235.5" y="247" width="14.0" height="1" fill="#808080"/>
<rect x="235.5" y="247" width="1" height="14" fill="#808080"/>
<rect x="235.5" y="260" width="14.0" height="1" fill="#ffffff"/>
<rect x="248.5" y="247" width="1" height="14" fill="#ffffff"/>
<path d="M238.5 249 V259.5 H247.5" stroke="#000" stroke-width="1" fill="none"/><rect x="241" y="253.5" width="5.5" height="5" rx="1" fill="#e01010"/><path d="M242 254 V252.5 A1.75 1.75 0 0 1 245.5 252.5 V254" stroke="#e01010" stroke-width="1.3" fill="none"/>
<rect x="253.5" y="247" width="14" height="14" fill="#d4d0c8" />
<rect x="253.5" y="247" width="14.0" height="1" fill="#ffffff"/>
<rect x="253.5" y="247" width="1" height="14" fill="#ffffff"/>
<rect x="253.5" y="260" width="14.0" height="1" fill="#404040"/>
<rect x="266.5" y="247" width="1" height="14" fill="#404040"/>
<rect x="254.5" y="259" width="12.0" height="1" fill="#808080"/>
<rect x="265.5" y="248" width="1" height="12" fill="#808080"/>
<path d="M258.5 248 V260 M255 256 H262" stroke="#909090" stroke-width="1"/><circle cx="258.5" cy="256" r="2" fill="none" stroke="#909090" stroke-width="1"/><path d="M261 252.5 H265.5" stroke="#e06060" stroke-width="1.4" stroke-dasharray="1 1"/>
<rect x="271.5" y="247" width="14" height="14" fill="#d4d0c8" />
<rect x="271.5" y="247" width="14.0" height="1" fill="#ffffff"/>
<rect x="271.5" y="247" width="1" height="14" fill="#ffffff"/>
<rect x="271.5" y="260" width="14.0" height="1" fill="#404040"/>
<rect x="284.5" y="247" width="1" height="14" fill="#404040"/>
<rect x="272.5" y="259" width="12.0" height="1" fill="#808080"/>
<rect x="283.5" y="248" width="1" height="12" fill="#808080"/>
<path d="M274 258 L280 251 L283 257 M274.5 254 L283.5 250" stroke="#c02020" stroke-width="1" fill="none"/><path d="M274 255 L283 250.5" stroke="#303030" stroke-width="0.8"/>
<rect x="289.5" y="247" width="38.5" height="14" fill="#d4d0c8" />
<rect x="289.5" y="247" width="38.5" height="1" fill="#ffffff"/>
<rect x="289.5" y="247" width="1" height="14" fill="#ffffff"/>
<rect x="289.5" y="260" width="38.5" height="1" fill="#404040"/>
<rect x="327.0" y="247" width="1" height="14" fill="#404040"/>
<rect x="290.5" y="259" width="36.5" height="1" fill="#808080"/>
<rect x="326.0" y="248" width="1" height="12" fill="#808080"/>
<path d="M292 259 L302 249" stroke="#303030" stroke-width="1"/><circle cx="293.5" cy="257.5" r="1" fill="#e02020"/><circle cx="296.5" cy="255" r="1" fill="#e02020"/><circle cx="299" cy="252" r="1" fill="#e02020"/><circle cx="301.5" cy="250" r="1" fill="#e02020"/>
<text x="304" y="257.3" font-size="8.7" fill="#000" font-weight="400" text-anchor="start" >Fit</text>
<path d="M321.0 252.3 H326.0 L323.5 255.0 Z" fill="#000"/>
<rect x="332.5" y="247" width="14" height="14" fill="#d4d0c8" />
<rect x="332.5" y="247" width="14.0" height="1" fill="#ffffff"/>
<rect x="332.5" y="247" width="1" height="14" fill="#ffffff"/>
<rect x="332.5" y="260" width="14.0" height="1" fill="#404040"/>
<rect x="345.5" y="247" width="1" height="14" fill="#404040"/>
<rect x="333.5" y="259" width="12.0" height="1" fill="#808080"/>
<rect x="344.5" y="248" width="1" height="12" fill="#808080"/>
<rect x="335" y="249" width="10" height="9.5" rx="2" fill="#141414"/><rect x="336.5" y="250.5" width="7" height="1.6" fill="#e0e0e0"/><rect x="336.5" y="253.5" width="7" height="3" fill="#4a4a4a"/>
<rect x="350.5" y="247" width="14" height="14" fill="#d4d0c8" />
<rect x="350.5" y="247" width="14.0" height="1" fill="#ffffff"/>
<rect x="350.5" y="247" width="1" height="14" fill="#ffffff"/>
<rect x="350.5" y="260" width="14.0" height="1" fill="#404040"/>
<rect x="363.5" y="247" width="1" height="14" fill="#404040"/>
<rect x="351.5" y="259" width="12.0" height="1" fill="#808080"/>
<rect x="362.5" y="248" width="1" height="12" fill="#808080"/>
<text x="357.5" y="259.2" font-size="13.5" fill="#000" font-weight="700" text-anchor="middle" font-family="Liberation Serif">A</text>
<rect x="368.5" y="247" width="14" height="14" fill="#d4d0c8" />
<rect x="368.5" y="247" width="14.0" height="1" fill="#ffffff"/>
<rect x="368.5" y="247" width="1" height="14" fill="#ffffff"/>
<rect x="368.5" y="260" width="14.0" height="1" fill="#404040"/>
<rect x="381.5" y="247" width="1" height="14" fill="#404040"/>
<rect x="369.5" y="259" width="12.0" height="1" fill="#808080"/>
<rect x="380.5" y="248" width="1" height="12" fill="#808080"/>
<path d="M370.5 257 Q372.5 251 374.5 255 T380 257" stroke="#e02030" stroke-width="1.4" fill="none"/><path d="M375 257 L380.5 250" stroke="#e8d820" stroke-width="2.2"/><path d="M380 249.5 L381.5 248.5" stroke="#402020" stroke-width="1.5"/>
<rect x="386.5" y="247" width="13" height="14" fill="#d4d0c8" />
<rect x="386.5" y="247" width="13.0" height="1" fill="#ffffff"/>
<rect x="386.5" y="247" width="1" height="14" fill="#ffffff"/>
<rect x="386.5" y="260" width="13.0" height="1" fill="#404040"/>
<rect x="398.5" y="247" width="1" height="14" fill="#404040"/>
<rect x="387.5" y="259" width="11.0" height="1" fill="#808080"/>
<rect x="397.5" y="248" width="1" height="12" fill="#808080"/>
<text x="393" y="259" font-size="13" fill="#000" font-weight="400" text-anchor="middle" >Σ</text>
<rect x="399.5" y="247" width="10.5" height="14" fill="#d4d0c8" />
<rect x="399.5" y="247" width="10.5" height="1" fill="#ffffff"/>
<rect x="399.5" y="247" width="1" height="14" fill="#ffffff"/>
<rect x="399.5" y="260" width="10.5" height="1" fill="#404040"/>
<rect x="409.0" y="247" width="1" height="14" fill="#404040"/>
<rect x="400.5" y="259" width="8.5" height="1" fill="#808080"/>
<rect x="408.0" y="248" width="1" height="12" fill="#808080"/>
<path d="M402.2 252.3 H407.2 L404.7 255.0 Z" fill="#000"/>
<rect x="414.5" y="247" width="46" height="14" fill="#d4d0c8" />
<rect x="414.5" y="247" width="46.0" height="1" fill="#ffffff"/>
<rect x="414.5" y="247" width="1" height="14" fill="#ffffff"/>
<rect x="414.5" y="260" width="46.0" height="1" fill="#404040"/>
<rect x="459.5" y="247" width="1" height="14" fill="#404040"/>
<rect x="415.5" y="259" width="44.0" height="1" fill="#808080"/>
<rect x="458.5" y="248" width="1" height="12" fill="#808080"/>
<path d="M420 249 L422.5 252.5 Q424 255.5 420 258 Q416 255.5 417.5 252.5 Z" fill="none" stroke="#303030" stroke-width="1"/><circle cx="420" cy="256.2" r="1.9" fill="#e00000"/>
<text x="428.5" y="257.3" font-size="8.7" fill="#000" font-weight="400" text-anchor="start" >Data</text>
<path d="M453.0 252.3 H458.0 L455.5 255.0 Z" fill="#000"/>
<rect x="466" y="247" width="13" height="14" fill="#d4d0c8" />
<rect x="466" y="247" width="13" height="1" fill="#ffffff"/>
<rect x="466" y="247" width="1" height="14" fill="#ffffff"/>
<rect x="466" y="260" width="13" height="1" fill="#404040"/>
<rect x="478" y="247" width="1" height="14" fill="#404040"/>
<rect x="467" y="259" width="11" height="1" fill="#808080"/>
<rect x="477" y="248" width="1" height="12" fill="#808080"/>
<path d="M468.8 249.8 L476.2 258.2 M476.2 249.8 L468.8 258.2" stroke="#e01010" stroke-width="1.8"/>
<rect x="482.5" y="247" width="13" height="14" fill="#d4d0c8" />
<rect x="482.5" y="247" width="13.0" height="1" fill="#ffffff"/>
<rect x="482.5" y="247" width="1" height="14" fill="#ffffff"/>
<rect x="482.5" y="260" width="13.0" height="1" fill="#404040"/>
<rect x="494.5" y="247" width="1" height="14" fill="#404040"/>
<rect x="483.5" y="259" width="11.0" height="1" fill="#808080"/>
<rect x="493.5" y="248" width="1" height="12" fill="#808080"/>
<path d="M485.5 249 V257.5 H494" stroke="#40a0a0" stroke-width="0.9" fill="none" stroke-dasharray="1 1"/><path d="M487 251 H494 M487 254 H494" stroke="#a0d8d8" stroke-width="0.7" stroke-dasharray="1 1"/><path d="M486 255.5 L489 252.5 L491 253.5 L494 250" stroke="#d04080" stroke-width="1" fill="none"/><path d="M486 259.3 H494.5" stroke="#202020" stroke-width="1.3" stroke-dasharray="1.4 1.4"/>
<rect x="495.5" y="247" width="10.5" height="14" fill="#d4d0c8" />
<rect x="495.5" y="247" width="10.5" height="1" fill="#ffffff"/>
<rect x="495.5" y="247" width="1" height="14" fill="#ffffff"/>
<rect x="495.5" y="260" width="10.5" height="1" fill="#404040"/>
<rect x="505.0" y="247" width="1" height="14" fill="#404040"/>
<rect x="496.5" y="259" width="8.5" height="1" fill="#808080"/>
<rect x="504.0" y="248" width="1" height="12" fill="#808080"/>
<path d="M498.2 252.3 H503.2 L500.7 255.0 Z" fill="#000"/>
<rect x="161" y="263" width="634" height="1" fill="#808080"/>
<rect x="161" y="263" width="1" height="131" fill="#808080"/>
<rect x="162" y="264" width="633" height="0.0" fill="#404040"/>
<rect x="162" y="264" width="633" height="130" fill="#ffffff" />
<rect x="157" y="394" width="1" height="183" fill="#808080"/>
<rect x="158" y="394" width="1" height="183" fill="#404040"/>
<rect x="159" y="394" width="1" height="183" fill="#ffffff"/>
<rect x="159" y="395" width="638" height="1" fill="#ffffff"/>
<rect x="797" y="394" width="1" height="183" fill="#5a5a5a"/>
<rect x="795" y="394" width="2" height="183" fill="#e4e2de"/>
<rect x="798" y="394" width="2" height="183" fill="#d4d0c8" />
<rect x="160" y="397" width="636" height="13" fill="url(#tg)" />
<text x="175" y="406.2" font-size="7.8" fill="#e6e6e6" font-weight="700" text-anchor="start" >Graph 3</text>
<rect x="163.5" y="398.5" width="7" height="10" fill="#fff" stroke="#202020" stroke-width="1"/><circle cx="165.5" cy="400.5" r="1.4" fill="#e03050"/><path d="M165 406.5 V403 M167 407.5 H169.5 V404" stroke="#202020" stroke-width="1" fill="none"/>
<rect x="760" y="399" width="10" height="9.5" fill="#d4d0c8" />
<rect x="760" y="399" width="10" height="1" fill="#ffffff"/>
<rect x="760" y="399" width="1" height="9.5" fill="#ffffff"/>
<rect x="760" y="407.5" width="10" height="1" fill="#404040"/>
<rect x="769" y="399" width="1" height="9.5" fill="#404040"/>
<rect x="761" y="406.5" width="8" height="1" fill="#808080"/>
<rect x="768" y="400" width="1" height="7.5" fill="#808080"/>
<rect x="762.5" y="405.0" width="5" height="1.6" fill="#000" />
<rect x="771" y="399" width="10" height="9.5" fill="#d4d0c8" />
<rect x="771" y="399" width="10" height="1" fill="#ffffff"/>
<rect x="771" y="399" width="1" height="9.5" fill="#ffffff"/>
<rect x="771" y="407.5" width="10" height="1" fill="#404040"/>
<rect x="780" y="399" width="1" height="9.5" fill="#404040"/>
<rect x="772" y="406.5" width="8" height="1" fill="#808080"/>
<rect x="779" y="400" width="1" height="7.5" fill="#808080"/>
<rect x="773" y="400.8" width="5.5" height="5.5" fill="none" stroke="#000" stroke-width="1"/>
<rect x="772.5" y="400.3" width="6.5" height="1.6" fill="#000"/>
<rect x="783" y="399" width="11" height="9.5" fill="#d4d0c8" />
<rect x="783" y="399" width="11" height="1" fill="#ffffff"/>
<rect x="783" y="399" width="1" height="9.5" fill="#ffffff"/>
<rect x="783" y="407.5" width="11" height="1" fill="#404040"/>
<rect x="793" y="399" width="1" height="9.5" fill="#404040"/>
<rect x="784" y="406.5" width="9" height="1" fill="#808080"/>
<rect x="792" y="400" width="1" height="7.5" fill="#808080"/>
<path d="M785.6 401 L790.8 405.5 M790.8 401 L785.6 405.5" stroke="#000" stroke-width="1.5"/>
<rect x="164.5" y="413" width="14" height="14" fill="#d4d0c8" />
<rect x="164.5" y="413" width="14.0" height="1" fill="#ffffff"/>
<rect x="164.5" y="413" width="1" height="14" fill="#ffffff"/>
<rect x="164.5" y="426" width="14.0" height="1" fill="#404040"/>
<rect x="177.5" y="413" width="1" height="14" fill="#404040"/>
<rect x="165.5" y="425" width="12.0" height="1" fill="#808080"/>
<rect x="176.5" y="414" width="1" height="12" fill="#808080"/>
<rect x="167" y="415.5" width="9" height="9" fill="#fff" stroke="#404040" stroke-width="1"/><rect x="167" y="420" width="4.5" height="4.5" fill="#fff" stroke="#6030c0" stroke-width="1"/><path d="M168 422.5 H170.5" stroke="#d02020" stroke-width="1"/><path d="M171.5 420 L175 416.5" stroke="#000" stroke-width="1"/>
<rect x="182.5" y="413" width="14" height="14" fill="#d4d0c8" />
<rect x="182.5" y="413" width="14.0" height="1" fill="#ffffff"/>
<rect x="182.5" y="413" width="1" height="14" fill="#ffffff"/>
<rect x="182.5" y="426" width="14.0" height="1" fill="#404040"/>
<rect x="195.5" y="413" width="1" height="14" fill="#404040"/>
<rect x="183.5" y="425" width="12.0" height="1" fill="#808080"/>
<rect x="194.5" y="414" width="1" height="12" fill="#808080"/>
<circle cx="188.5" cy="418.8" r="3.3" fill="#fff" stroke="#000" stroke-width="1.1"/><path d="M190.7 421.2 L194.0 424.5" stroke="#000" stroke-width="2.2"/>
<path d="M186.3 418.8 H190.7 M188.5 416.6 V421" stroke="#000" stroke-width="1.5"/>
<rect x="200" y="413" width="14" height="14" fill="#d4d0c8" />
<rect x="200" y="413" width="14" height="1" fill="#ffffff"/>
<rect x="200" y="413" width="1" height="14" fill="#ffffff"/>
<rect x="200" y="426" width="14" height="1" fill="#404040"/>
<rect x="213" y="413" width="1" height="14" fill="#404040"/>
<rect x="201" y="425" width="12" height="1" fill="#808080"/>
<rect x="212" y="414" width="1" height="12" fill="#808080"/>
<circle cx="206" cy="418.8" r="3.3" fill="#fff" stroke="#000" stroke-width="1.1"/><path d="M208.2 421.2 L211.5 424.5" stroke="#000" stroke-width="2.2"/>
<path d="M203.8 418.8 H208.2" stroke="#000" stroke-width="1.5"/>
<rect x="218" y="413" width="14" height="14" fill="#d4d0c8" />
<rect x="218" y="413" width="14" height="1" fill="#ffffff"/>
<rect x="218" y="413" width="1" height="14" fill="#ffffff"/>
<rect x="218" y="426" width="14" height="1" fill="#404040"/>
<rect x="231" y="413" width="1" height="14" fill="#404040"/>
<rect x="219" y="425" width="12" height="1" fill="#808080"/>
<rect x="230" y="414" width="1" height="12" fill="#808080"/>
<rect x="219.5" y="414.5" width="10" height="10" fill="none" stroke="#a0a0a0" stroke-width="0.8"/>
<circle cx="224" cy="418.8" r="3.3" fill="#fff" stroke="#000" stroke-width="1.1"/><path d="M226.2 421.2 L229.5 424.5" stroke="#000" stroke-width="2.2"/>
<path d="M221.8 418.8 H226.2 M224 416.6 V421" stroke="#000" stroke-width="1.5"/>
<rect x="235.5" y="413" width="14" height="14" fill="#e8e6e2" />
<rect x="235.5" y="413" width="14.0" height="1" fill="#808080"/>
<rect x="235.5" y="413" width="1" height="14" fill="#808080"/>
<rect x="235.5" y="426" width="14.0" height="1" fill="#ffffff"/>
<rect x="248.5" y="413" width="1" height="14" fill="#ffffff"/>
<path d="M238.5 415 V425.5 H247.5" stroke="#000" stroke-width="1" fill="none"/><rect x="241" y="419.5" width="5.5" height="5" rx="1" fill="#e01010"/><path d="M242 420 V418.5 A1.75 1.75 0 0 1 245.5 418.5 V420" stroke="#e01010" stroke-width="1.3" fill="none"/>
<rect x="253.5" y="413" width="14" height="14" fill="#d4d0c8" />
<rect x="253.5" y="413" width="14.0" height="1" fill="#ffffff"/>
<rect x="253.5" y="413" width="1" height="14" fill="#ffffff"/>
<rect x="253.5" y="426" width="14.0" height="1" fill="#404040"/>
<rect x="266.5" y="413" width="1" height="14" fill="#404040"/>
<rect x="254.5" y="425" width="12.0" height="1" fill="#808080"/>
<rect x="265.5" y="414" width="1" height="12" fill="#808080"/>
<path d="M258.5 414 V426 M255 422 H262" stroke="#909090" stroke-width="1"/><circle cx="258.5" cy="422" r="2" fill="none" stroke="#909090" stroke-width="1"/><path d="M261 418.5 H265.5" stroke="#e06060" stroke-width="1.4" stroke-dasharray="1 1"/>
<rect x="271.5" y="413" width="14" height="14" fill="#d4d0c8" />
<rect x="271.5" y="413" width="14.0" height="1" fill="#ffffff"/>
<rect x="271.5" y="413" width="1" height="14" fill="#ffffff"/>
<rect x="271.5" y="426" width="14.0" height="1" fill="#404040"/>
<rect x="284.5" y="413" width="1" height="14" fill="#404040"/>
<rect x="272.5" y="425" width="12.0" height="1" fill="#808080"/>
<rect x="283.5" y="414" width="1" height="12" fill="#808080"/>
<path d="M274 424 L280 417 L283 423 M274.5 420 L283.5 416" stroke="#c02020" stroke-width="1" fill="none"/><path d="M274 421 L283 416.5" stroke="#303030" stroke-width="0.8"/>
<rect x="289.5" y="413" width="38.5" height="14" fill="#d4d0c8" />
<rect x="289.5" y="413" width="38.5" height="1" fill="#ffffff"/>
<rect x="289.5" y="413" width="1" height="14" fill="#ffffff"/>
<rect x="289.5" y="426" width="38.5" height="1" fill="#404040"/>
<rect x="327.0" y="413" width="1" height="14" fill="#404040"/>
<rect x="290.5" y="425" width="36.5" height="1" fill="#808080"/>
<rect x="326.0" y="414" width="1" height="12" fill="#808080"/>
<path d="M292 425 L302 415" stroke="#303030" stroke-width="1"/><circle cx="293.5" cy="423.5" r="1" fill="#e02020"/><circle cx="296.5" cy="421" r="1" fill="#e02020"/><circle cx="299" cy="418" r="1" fill="#e02020"/><circle cx="301.5" cy="416" r="1" fill="#e02020"/>
<text x="304" y="423.3" font-size="8.7" fill="#000" font-weight="400" text-anchor="start" >Fit</text>
<path d="M321.0 418.3 H326.0 L323.5 421.0 Z" fill="#000"/>
<rect x="332.5" y="413" width="14" height="14" fill="#d4d0c8" />
<rect x="332.5" y="413" width="14.0" height="1" fill="#ffffff"/>
<rect x="332.5" y="413" width="1" height="14" fill="#ffffff"/>
<rect x="332.5" y="426" width="14.0" height="1" fill="#404040"/>
<rect x="345.5" y="413" width="1" height="14" fill="#404040"/>
<rect x="333.5" y="425" width="12.0" height="1" fill="#808080"/>
<rect x="344.5" y="414" width="1" height="12" fill="#808080"/>
<rect x="335" y="415" width="10" height="9.5" rx="2" fill="#141414"/><rect x="336.5" y="416.5" width="7" height="1.6" fill="#e0e0e0"/><rect x="336.5" y="419.5" width="7" height="3" fill="#4a4a4a"/>
<rect x="350.5" y="413" width="14" height="14" fill="#d4d0c8" />
<rect x="350.5" y="413" width="14.0" height="1" fill="#ffffff"/>
<rect x="350.5" y="413" width="1" height="14" fill="#ffffff"/>
<rect x="350.5" y="426" width="14.0" height="1" fill="#404040"/>
<rect x="363.5" y="413" width="1" height="14" fill="#404040"/>
<rect x="351.5" y="425" width="12.0" height="1" fill="#808080"/>
<rect x="362.5" y="414" width="1" height="12" fill="#808080"/>
<text x="357.5" y="425.2" font-size="13.5" fill="#000" font-weight="700" text-anchor="middle" font-family="Liberation Serif">A</text>
<rect x="368.5" y="413" width="14" height="14" fill="#d4d0c8" />
<rect x="368.5" y="413" width="14.0" height="1" fill="#ffffff"/>
<rect x="368.5" y="413" width="1" height="14" fill="#ffffff"/>
<rect x="368.5" y="426" width="14.0" height="1" fill="#404040"/>
<rect x="381.5" y="413" width="1" height="14" fill="#404040"/>
<rect x="369.5" y="425" width="12.0" height="1" fill="#808080"/>
<rect x="380.5" y="414" width="1" height="12" fill="#808080"/>
<path d="M370.5 423 Q372.5 417 374.5 421 T380 423" stroke="#e02030" stroke-width="1.4" fill="none"/><path d="M375 423 L380.5 416" stroke="#e8d820" stroke-width="2.2"/><path d="M380 415.5 L381.5 414.5" stroke="#402020" stroke-width="1.5"/>
<rect x="386.5" y="413" width="13" height="14" fill="#d4d0c8" />
<rect x="386.5" y="413" width="13.0" height="1" fill="#ffffff"/>
<rect x="386.5" y="413" width="1" height="14" fill="#ffffff"/>
<rect x="386.5" y="426" width="13.0" height="1" fill="#404040"/>
<rect x="398.5" y="413" width="1" height="14" fill="#404040"/>
<rect x="387.5" y="425" width="11.0" height="1" fill="#808080"/>
<rect x="397.5" y="414" width="1" height="12" fill="#808080"/>
<text x="393" y="425" font-size="13" fill="#000" font-weight="400" text-anchor="middle" >Σ</text>
<rect x="399.5" y="413" width="10.5" height="14" fill="#d4d0c8" />
<rect x="399.5" y="413" width="10.5" height="1" fill="#ffffff"/>
<rect x="399.5" y="413" width="1" height="14" fill="#ffffff"/>
<rect x="399.5" y="426" width="10.5" height="1" fill="#404040"/>
<rect x="409.0" y="413" width="1" height="14" fill="#404040"/>
<rect x="400.5" y="425" width="8.5" height="1" fill="#808080"/>
<rect x="408.0" y="414" width="1" height="12" fill="#808080"/>
<path d="M402.2 418.3 H407.2 L404.7 421.0 Z" fill="#000"/>
<rect x="414.5" y="413" width="46" height="14" fill="#d4d0c8" />
<rect x="414.5" y="413" width="46.0" height="1" fill="#ffffff"/>
<rect x="414.5" y="413" width="1" height="14" fill="#ffffff"/>
<rect x="414.5" y="426" width="46.0" height="1" fill="#404040"/>
<rect x="459.5" y="413" width="1" height="14" fill="#404040"/>
<rect x="415.5" y="425" width="44.0" height="1" fill="#808080"/>
<rect x="458.5" y="414" width="1" height="12" fill="#808080"/>
<path d="M420 415 L422.5 418.5 Q424 421.5 420 424 Q416 421.5 417.5 418.5 Z" fill="none" stroke="#303030" stroke-width="1"/><circle cx="420" cy="422.2" r="1.9" fill="#e00000"/>
<text x="428.5" y="423.3" font-size="8.7" fill="#000" font-weight="400" text-anchor="start" >Data</text>
<path d="M453.0 418.3 H458.0 L455.5 421.0 Z" fill="#000"/>
<rect x="466" y="413" width="13" height="14" fill="#d4d0c8" />
<rect x="466" y="413" width="13" height="1" fill="#ffffff"/>
<rect x="466" y="413" width="1" height="14" fill="#ffffff"/>
<rect x="466" y="426" width="13" height="1" fill="#404040"/>
<rect x="478" y="413" width="1" height="14" fill="#404040"/>
<rect x="467" y="425" width="11" height="1" fill="#808080"/>
<rect x="477" y="414" width="1" height="12" fill="#808080"/>
<path d="M468.8 415.8 L476.2 424.2 M476.2 415.8 L468.8 424.2" stroke="#e01010" stroke-width="1.8"/>
<rect x="482.5" y="413" width="13" height="14" fill="#d4d0c8" />
<rect x="482.5" y="413" width="13.0" height="1" fill="#ffffff"/>
<rect x="482.5" y="413" width="1" height="14" fill="#ffffff"/>
<rect x="482.5" y="426" width="13.0" height="1" fill="#404040"/>
<rect x="494.5" y="413" width="1" height="14" fill="#404040"/>
<rect x="483.5" y="425" width="11.0" height="1" fill="#808080"/>
<rect x="493.5" y="414" width="1" height="12" fill="#808080"/>
<path d="M485.5 415 V423.5 H494" stroke="#40a0a0" stroke-width="0.9" fill="none" stroke-dasharray="1 1"/><path d="M487 417 H494 M487 420 H494" stroke="#a0d8d8" stroke-width="0.7" stroke-dasharray="1 1"/><path d="M486 421.5 L489 418.5 L491 419.5 L494 416" stroke="#d04080" stroke-width="1" fill="none"/><path d="M486 425.3 H494.5" stroke="#202020" stroke-width="1.3" stroke-dasharray="1.4 1.4"/>
<rect x="495.5" y="413" width="10.5" height="14" fill="#d4d0c8" />
<rect x="495.5" y="413" width="10.5" height="1" fill="#ffffff"/>
<rect x="495.5" y="413" width="1" height="14" fill="#ffffff"/>
<rect x="495.5" y="426" width="10.5" height="1" fill="#404040"/>
<rect x="505.0" y="413" width="1" height="14" fill="#404040"/>
<rect x="496.5" y="425" width="8.5" height="1" fill="#808080"/>
<rect x="504.0" y="414" width="1" height="12" fill="#808080"/>
<path d="M498.2 418.3 H503.2 L500.7 421.0 Z" fill="#000"/>
<rect x="161" y="429" width="634" height="1" fill="#808080"/>
<rect x="161" y="429" width="1" height="145" fill="#808080"/>
<rect x="162" y="430" width="633" height="0.0" fill="#404040"/>
<rect x="162" y="430" width="633" height="144" fill="#ffffff" />
<rect x="0" y="574" width="800" height="3" fill="#e6e4e0" />
<rect x="0" y="577" width="800" height="1" fill="#8c8884" />
<rect x="0" y="578" width="800" height="2" fill="#efede9" />
<rect x="0" y="580" width="800" height="2" fill="#d4d0c8" />
<clipPath id="tc209"><rect x="162" y="89" width="633" height="139"/></clipPath>
<clipPath id="tc376"><rect x="162" y="264" width="633" height="128"/></clipPath>
<clipPath id="tc544"><rect x="162" y="430" width="633" height="144"/></clipPath>
<clipPath id="c1"><rect x="197" y="93.5" width="594" height="115.9"/></clipPath>
<rect x="206.45" y="92.5" width="1" height="116.9" fill="#f3f3f3"/>
<rect x="206.45" y="209.4" width="1" height="2.5" fill="#d4d4d4"/>
<rect x="216.70" y="92.5" width="1" height="116.9" fill="#f3f3f3"/>
<rect x="216.70" y="209.4" width="1" height="2.5" fill="#d4d4d4"/>
<rect x="226.94" y="92.5" width="1" height="116.9" fill="#f3f3f3"/>
<rect x="226.94" y="209.4" width="1" height="2.5" fill="#d4d4d4"/>
<rect x="237.19" y="92.5" width="1" height="116.9" fill="#f3f3f3"/>
<rect x="237.19" y="209.4" width="1" height="2.5" fill="#d4d4d4"/>
<rect x="247.43" y="92.5" width="1" height="116.9" fill="#f3f3f3"/>
<rect x="247.43" y="209.4" width="1" height="2.5" fill="#d4d4d4"/>
<rect x="257.68" y="92.5" width="1" height="116.9" fill="#f3f3f3"/>
<rect x="257.68" y="209.4" width="1" height="2.5" fill="#d4d4d4"/>
<rect x="267.92" y="92.5" width="1" height="116.9" fill="#f3f3f3"/>
<rect x="267.92" y="209.4" width="1" height="2.5" fill="#d4d4d4"/>
<rect x="278.17" y="92.5" width="1" height="116.9" fill="#f3f3f3"/>
<rect x="278.17" y="209.4" width="1" height="2.5" fill="#d4d4d4"/>
<rect x="288.41" y="92.5" width="1" height="116.9" fill="#f3f3f3"/>
<rect x="288.41" y="209.4" width="1" height="2.5" fill="#d4d4d4"/>
<rect x="298.66" y="92.5" width="1" height="116.9" fill="#f3f3f3"/>
<rect x="298.66" y="209.4" width="1" height="2.5" fill="#d4d4d4"/>
<rect x="308.90" y="92.5" width="1" height="116.9" fill="#f3f3f3"/>
<rect x="308.90" y="209.4" width="1" height="2.5" fill="#d4d4d4"/>
<rect x="319.15" y="92.5" width="1" height="116.9" fill="#f3f3f3"/>
<rect x="319.15" y="209.4" width="1" height="2.5" fill="#d4d4d4"/>
<rect x="329.39" y="92.5" width="1" height="116.9" fill="#f3f3f3"/>
<rect x="329.39" y="209.4" width="1" height="2.5" fill="#d4d4d4"/>
<rect x="339.64" y="92.5" width="1" height="116.9" fill="#f3f3f3"/>
<rect x="339.64" y="209.4" width="1" height="2.5" fill="#d4d4d4"/>
<rect x="349.88" y="92.5" width="1" height="116.9" fill="#f3f3f3"/>
<rect x="349.88" y="209.4" width="1" height="2.5" fill="#d4d4d4"/>
<rect x="360.13" y="92.5" width="1" height="116.9" fill="#f3f3f3"/>
<rect x="360.13" y="209.4" width="1" height="2.5" fill="#d4d4d4"/>
<rect x="370.38" y="92.5" width="1" height="116.9" fill="#f3f3f3"/>
<rect x="370.38" y="209.4" width="1" height="2.5" fill="#d4d4d4"/>
<rect x="380.62" y="92.5" width="1" height="116.9" fill="#f3f3f3"/>
<rect x="380.62" y="209.4" width="1" height="2.5" fill="#d4d4d4"/>
<rect x="390.87" y="92.5" width="1" height="116.9" fill="#f3f3f3"/>
<rect x="390.87" y="209.4" width="1" height="2.5" fill="#d4d4d4"/>
<rect x="401.11" y="92.5" width="1" height="116.9" fill="#f3f3f3"/>
<rect x="401.11" y="209.4" width="1" height="2.5" fill="#d4d4d4"/>
<rect x="411.36" y="92.5" width="1" height="116.9" fill="#f3f3f3"/>
<rect x="411.36" y="209.4" width="1" height="2.5" fill="#d4d4d4"/>
<rect x="421.60" y="92.5" width="1" height="116.9" fill="#f3f3f3"/>
<rect x="421.60" y="209.4" width="1" height="2.5" fill="#d4d4d4"/>
<rect x="431.84" y="92.5" width="1" height="116.9" fill="#f3f3f3"/>
<rect x="431.84" y="209.4" width="1" height="2.5" fill="#d4d4d4"/>
<rect x="442.09" y="92.5" width="1" height="116.9" fill="#f3f3f3"/>
<rect x="442.09" y="209.4" width="1" height="2.5" fill="#d4d4d4"/>
<rect x="452.33" y="92.5" width="1" height="116.9" fill="#f3f3f3"/>
<rect x="452.33" y="209.4" width="1" height="2.5" fill="#d4d4d4"/>
<rect x="462.58" y="92.5" width="1" height="116.9" fill="#f3f3f3"/>
<rect x="462.58" y="209.4" width="1" height="2.5" fill="#d4d4d4"/>
<rect x="472.82" y="92.5" width="1" height="116.9" fill="#f3f3f3"/>
<rect x="472.82" y="209.4" width="1" height="2.5" fill="#d4d4d4"/>
<rect x="483.07" y="92.5" width="1" height="116.9" fill="#f3f3f3"/>
<rect x="483.07" y="209.4" width="1" height="2.5" fill="#d4d4d4"/>
<rect x="493.31" y="92.5" width="1" height="116.9" fill="#f3f3f3"/>
<rect x="493.31" y="209.4" width="1" height="2.5" fill="#d4d4d4"/>
<rect x="503.56" y="92.5" width="1" height="116.9" fill="#f3f3f3"/>
<rect x="503.56" y="209.4" width="1" height="2.5" fill="#d4d4d4"/>
<rect x="513.81" y="92.5" width="1" height="116.9" fill="#f3f3f3"/>
<rect x="513.81" y="209.4" width="1" height="2.5" fill="#d4d4d4"/>
<rect x="524.05" y="92.5" width="1" height="116.9" fill="#f3f3f3"/>
<rect x="524.05" y="209.4" width="1" height="2.5" fill="#d4d4d4"/>
<rect x="534.29" y="92.5" width="1" height="116.9" fill="#f3f3f3"/>
<rect x="534.29" y="209.4" width="1" height="2.5" fill="#d4d4d4"/>
<rect x="544.54" y="92.5" width="1" height="116.9" fill="#f3f3f3"/>
<rect x="544.54" y="209.4" width="1" height="2.5" fill="#d4d4d4"/>
<rect x="554.79" y="92.5" width="1" height="116.9" fill="#f3f3f3"/>
<rect x="554.79" y="209.4" width="1" height="2.5" fill="#d4d4d4"/>
<rect x="565.03" y="92.5" width="1" height="116.9" fill="#f3f3f3"/>
<rect x="565.03" y="209.4" width="1" height="2.5" fill="#d4d4d4"/>
<rect x="575.28" y="92.5" width="1" height="116.9" fill="#f3f3f3"/>
<rect x="575.28" y="209.4" width="1" height="2.5" fill="#d4d4d4"/>
<rect x="585.52" y="92.5" width="1" height="116.9" fill="#f3f3f3"/>
<rect x="585.52" y="209.4" width="1" height="2.5" fill="#d4d4d4"/>
<rect x="595.77" y="92.5" width="1" height="116.9" fill="#f3f3f3"/>
<rect x="595.77" y="209.4" width="1" height="2.5" fill="#d4d4d4"/>
<rect x="606.01" y="92.5" width="1" height="116.9" fill="#f3f3f3"/>
<rect x="606.01" y="209.4" width="1" height="2.5" fill="#d4d4d4"/>
<rect x="616.25" y="92.5" width="1" height="116.9" fill="#f3f3f3"/>
<rect x="616.25" y="209.4" width="1" height="2.5" fill="#d4d4d4"/>
<rect x="626.50" y="92.5" width="1" height="116.9" fill="#f3f3f3"/>
<rect x="626.50" y="209.4" width="1" height="2.5" fill="#d4d4d4"/>
<rect x="636.75" y="92.5" width="1" height="116.9" fill="#f3f3f3"/>
<rect x="636.75" y="209.4" width="1" height="2.5" fill="#d4d4d4"/>
<rect x="646.99" y="92.5" width="1" height="116.9" fill="#f3f3f3"/>
<rect x="646.99" y="209.4" width="1" height="2.5" fill="#d4d4d4"/>
<rect x="657.24" y="92.5" width="1" height="116.9" fill="#f3f3f3"/>
<rect x="657.24" y="209.4" width="1" height="2.5" fill="#d4d4d4"/>
<rect x="667.48" y="92.5" width="1" height="116.9" fill="#f3f3f3"/>
<rect x="667.48" y="209.4" width="1" height="2.5" fill="#d4d4d4"/>
<rect x="677.73" y="92.5" width="1" height="116.9" fill="#f3f3f3"/>
<rect x="677.73" y="209.4" width="1" height="2.5" fill="#d4d4d4"/>
<rect x="687.97" y="92.5" width="1" height="116.9" fill="#f3f3f3"/>
<rect x="687.97" y="209.4" width="1" height="2.5" fill="#d4d4d4"/>
<rect x="698.22" y="92.5" width="1" height="116.9" fill="#f3f3f3"/>
<rect x="698.22" y="209.4" width="1" height="2.5" fill="#d4d4d4"/>
<rect x="708.46" y="92.5" width="1" height="116.9" fill="#f3f3f3"/>
<rect x="708.46" y="209.4" width="1" height="2.5" fill="#d4d4d4"/>
<rect x="718.71" y="92.5" width="1" height="116.9" fill="#f3f3f3"/>
<rect x="718.71" y="209.4" width="1" height="2.5" fill="#d4d4d4"/>
<rect x="728.95" y="92.5" width="1" height="116.9" fill="#f3f3f3"/>
<rect x="728.95" y="209.4" width="1" height="2.5" fill="#d4d4d4"/>
<rect x="739.19" y="92.5" width="1" height="116.9" fill="#f3f3f3"/>
<rect x="739.19" y="209.4" width="1" height="2.5" fill="#d4d4d4"/>
<rect x="749.44" y="92.5" width="1" height="116.9" fill="#f3f3f3"/>
<rect x="749.44" y="209.4" width="1" height="2.5" fill="#d4d4d4"/>
<rect x="759.68" y="92.5" width="1" height="116.9" fill="#f3f3f3"/>
<rect x="759.68" y="209.4" width="1" height="2.5" fill="#d4d4d4"/>
<rect x="769.93" y="92.5" width="1" height="116.9" fill="#f3f3f3"/>
<rect x="769.93" y="209.4" width="1" height="2.5" fill="#d4d4d4"/>
<rect x="780.17" y="92.5" width="1" height="116.9" fill="#f3f3f3"/>
<rect x="780.17" y="209.4" width="1" height="2.5" fill="#d4d4d4"/>
<rect x="790.42" y="209.4" width="1" height="2.5" fill="#d4d4d4"/>
<rect x="197" y="207.43" width="594" height="1" fill="#f3f3f3"/>
<rect x="193" y="207.43" width="4" height="1" fill="#c8c8c8"/>
<rect x="197" y="201.80" width="594" height="1" fill="#f3f3f3"/>
<rect x="193" y="201.80" width="4" height="1" fill="#c8c8c8"/>
<rect x="197" y="196.18" width="594" height="1" fill="#f3f3f3"/>
<rect x="193" y="196.18" width="4" height="1" fill="#c8c8c8"/>
<rect x="197" y="190.55" width="594" height="1" fill="#f3f3f3"/>
<rect x="193" y="190.55" width="4" height="1" fill="#c8c8c8"/>
<rect x="197" y="184.93" width="594" height="1" fill="#f3f3f3"/>
<rect x="193" y="184.93" width="4" height="1" fill="#c8c8c8"/>
<rect x="197" y="179.30" width="594" height="1" fill="#f3f3f3"/>
<rect x="193" y="179.30" width="4" height="1" fill="#c8c8c8"/>
<rect x="197" y="173.68" width="594" height="1" fill="#f3f3f3"/>
<rect x="193" y="173.68" width="4" height="1" fill="#c8c8c8"/>
<rect x="197" y="168.05" width="594" height="1" fill="#f3f3f3"/>
<rect x="193" y="168.05" width="4" height="1" fill="#c8c8c8"/>
<rect x="197" y="162.43" width="594" height="1" fill="#f3f3f3"/>
<rect x="193" y="162.43" width="4" height="1" fill="#c8c8c8"/>
<rect x="197" y="156.80" width="594" height="1" fill="#f3f3f3"/>
<rect x="193" y="156.80" width="4" height="1" fill="#c8c8c8"/>
<rect x="197" y="151.18" width="594" height="1" fill="#f3f3f3"/>
<rect x="193" y="151.18" width="4" height="1" fill="#c8c8c8"/>
<rect x="197" y="145.55" width="594" height="1" fill="#f3f3f3"/>
<rect x="193" y="145.55" width="4" height="1" fill="#c8c8c8"/>
<rect x="197" y="139.93" width="594" height="1" fill="#f3f3f3"/>
<rect x="193" y="139.93" width="4" height="1" fill="#c8c8c8"/>
<rect x="197" y="134.30" width="594" height="1" fill="#f3f3f3"/>
<rect x="193" y="134.30" width="4" height="1" fill="#c8c8c8"/>
<rect x="197" y="128.68" width="594" height="1" fill="#f3f3f3"/>
<rect x="193" y="128.68" width="4" height="1" fill="#c8c8c8"/>
<rect x="197" y="123.05" width="594" height="1" fill="#f3f3f3"/>
<rect x="193" y="123.05" width="4" height="1" fill="#c8c8c8"/>
<rect x="197" y="117.43" width="594" height="1" fill="#f3f3f3"/>
<rect x="193" y="117.43" width="4" height="1" fill="#c8c8c8"/>
<rect x="197" y="111.80" width="594" height="1" fill="#f3f3f3"/>
<rect x="193" y="111.80" width="4" height="1" fill="#c8c8c8"/>
<rect x="197" y="106.17" width="594" height="1" fill="#f3f3f3"/>
<rect x="193" y="106.17" width="4" height="1" fill="#c8c8c8"/>
<rect x="197" y="100.55" width="594" height="1" fill="#f3f3f3"/>
<rect x="193" y="100.55" width="4" height="1" fill="#c8c8c8"/>
<rect x="197" y="94.92" width="594" height="1" fill="#f3f3f3"/>
<rect x="193" y="94.92" width="4" height="1" fill="#c8c8c8"/>
<rect x="216.55" y="92.5" width="1.3" height="116.9" fill="#6ee0e0"/>
<rect x="216.60" y="209.4" width="1.2" height="3.5" fill="#8c8c8c"/>
<rect x="257.53" y="92.5" width="1.3" height="116.9" fill="#6ee0e0"/>
<rect x="257.58" y="209.4" width="1.2" height="3.5" fill="#8c8c8c"/>
<rect x="298.51" y="92.5" width="1.3" height="116.9" fill="#6ee0e0"/>
<rect x="298.56" y="209.4" width="1.2" height="3.5" fill="#8c8c8c"/>
<rect x="339.49" y="92.5" width="1.3" height="116.9" fill="#6ee0e0"/>
<rect x="339.54" y="209.4" width="1.2" height="3.5" fill="#8c8c8c"/>
<rect x="380.47" y="92.5" width="1.3" height="116.9" fill="#6ee0e0"/>
<rect x="380.52" y="209.4" width="1.2" height="3.5" fill="#8c8c8c"/>
<rect x="421.45" y="92.5" width="1.3" height="116.9" fill="#6ee0e0"/>
<rect x="421.50" y="209.4" width="1.2" height="3.5" fill="#8c8c8c"/>
<rect x="462.43" y="92.5" width="1.3" height="116.9" fill="#6ee0e0"/>
<rect x="462.48" y="209.4" width="1.2" height="3.5" fill="#8c8c8c"/>
<rect x="503.41" y="92.5" width="1.3" height="116.9" fill="#6ee0e0"/>
<rect x="503.46" y="209.4" width="1.2" height="3.5" fill="#8c8c8c"/>
<rect x="544.39" y="92.5" width="1.3" height="116.9" fill="#6ee0e0"/>
<rect x="544.44" y="209.4" width="1.2" height="3.5" fill="#8c8c8c"/>
<rect x="585.37" y="92.5" width="1.3" height="116.9" fill="#6ee0e0"/>
<rect x="585.42" y="209.4" width="1.2" height="3.5" fill="#8c8c8c"/>
<rect x="626.35" y="92.5" width="1.3" height="116.9" fill="#6ee0e0"/>
<rect x="626.40" y="209.4" width="1.2" height="3.5" fill="#8c8c8c"/>
<rect x="667.33" y="92.5" width="1.3" height="116.9" fill="#6ee0e0"/>
<rect x="667.38" y="209.4" width="1.2" height="3.5" fill="#8c8c8c"/>
<rect x="708.31" y="92.5" width="1.3" height="116.9" fill="#6ee0e0"/>
<rect x="708.36" y="209.4" width="1.2" height="3.5" fill="#8c8c8c"/>
<rect x="749.29" y="92.5" width="1.3" height="116.9" fill="#6ee0e0"/>
<rect x="749.34" y="209.4" width="1.2" height="3.5" fill="#8c8c8c"/>
<rect x="790.27" y="92.5" width="1.3" height="116.9" fill="#6ee0e0"/>
<rect x="790.32" y="209.4" width="1.2" height="3.5" fill="#8c8c8c"/>
<rect x="197" y="201.65" width="594" height="1.3" fill="#6ee0e0"/>
<rect x="193" y="201.80" width="4" height="1" fill="#a8d8d8"/>
<rect x="197" y="179.15" width="594" height="1.3" fill="#6ee0e0"/>
<rect x="193" y="179.30" width="4" height="1" fill="#a8d8d8"/>
<rect x="197" y="156.65" width="594" height="1.3" fill="#6ee0e0"/>
<rect x="193" y="156.80" width="4" height="1" fill="#a8d8d8"/>
<rect x="197" y="134.15" width="594" height="1.3" fill="#6ee0e0"/>
<rect x="193" y="134.30" width="4" height="1" fill="#a8d8d8"/>
<rect x="197" y="111.65" width="594" height="1.3" fill="#6ee0e0"/>
<rect x="193" y="111.80" width="4" height="1" fill="#a8d8d8"/>
<rect x="197" y="201.60" width="594" height="1.4" fill="#3c3c3c"/>
<rect x="196.5" y="92.5" width="1" height="116.9" fill="#c8c8c8"/>
<rect x="790.2" y="92.5" width="1.4" height="116.9" fill="#3a6a6a"/>
<rect x="196.5" y="91.8" width="595" height="1.5" fill="#404040"/>
<rect x="196.5" y="208.70000000000002" width="595" height="1.5" fill="#404040"/>
<text x="217.20" y="222.90" font-size="8.6" fill="#202020" text-anchor="middle">0.2</text>
<text x="258.18" y="222.90" font-size="8.6" fill="#202020" text-anchor="middle">0.4</text>
<text x="299.16" y="222.90" font-size="8.6" fill="#202020" text-anchor="middle">0.6</text>
<text x="340.14" y="222.90" font-size="8.6" fill="#202020" text-anchor="middle">0.8</text>
<text x="381.12" y="222.90" font-size="8.6" fill="#202020" text-anchor="middle">1.0</text>
<text x="422.10" y="222.90" font-size="8.6" fill="#202020" text-anchor="middle">1.2</text>
<text x="463.08" y="222.90" font-size="8.6" fill="#202020" text-anchor="middle">1.4</text>
<text x="504.06" y="222.90" font-size="8.6" fill="#202020" text-anchor="middle">1.6</text>
<text x="545.04" y="222.90" font-size="8.6" fill="#202020" text-anchor="middle">1.8</text>
<text x="586.02" y="222.90" font-size="8.6" fill="#202020" text-anchor="middle">2.0</text>
<text x="627.00" y="222.90" font-size="8.6" fill="#202020" text-anchor="middle">2.2</text>
<text x="667.98" y="222.90" font-size="8.6" fill="#202020" text-anchor="middle">2.4</text>
<text x="708.96" y="222.90" font-size="8.6" fill="#202020" text-anchor="middle">2.6</text>
<text x="749.94" y="222.90" font-size="8.6" fill="#202020" text-anchor="middle">2.8</text>
<text x="791.50" y="222.90" font-size="8.6" fill="#202020" text-anchor="end">3.0</text>
<g clip-path="url(#tc209)"><text x="494.00" y="232.90" font-size="8.4" fill="#202020" text-anchor="middle">Time( s )</text></g>
<text x="190.5" y="206.10" font-size="8.6" fill="#202020" text-anchor="end">0.0</text>
<text x="190.5" y="183.60" font-size="8.6" fill="#202020" text-anchor="end">0.2</text>
<text x="190.5" y="161.10" font-size="8.6" fill="#202020" text-anchor="end">0.4</text>
<text x="190.5" y="138.60" font-size="8.6" fill="#202020" text-anchor="end">0.6</text>
<text x="190.5" y="116.10" font-size="8.6" fill="#202020" text-anchor="end">0.8</text>
<g clip-path="url(#c1)">
<path d="M227.04 200.28 L262.79 198.53 L288.20 196.78 L309.00 195.04 L327.13 193.29 L343.42 191.55 L358.27 189.81 L372.10 188.06 L385.01 186.32 L397.31 184.57 L408.88 182.83 L420.05 181.08 L430.60 179.35 L440.85 177.61 L450.79 175.85 L460.31 174.12 L469.64 172.36 L478.65 170.62 L487.36 168.88 L495.97 167.13 L504.26 165.39 L512.36 163.65 L520.35 161.90 L528.14 160.16 L535.82 158.41 L543.30 156.67 L550.67 154.92 L557.85 153.18 L564.92 151.45 L571.98 149.68 L578.85 147.94 L585.61 146.19 L592.27 144.45 L598.83 142.71 L605.28 140.97 L611.63 139.24 L617.98 137.48 L624.13 135.75 L630.28 134.04 L636.43 132.33 L642.47 130.64 L648.62 128.96 L655.38 127.26 L662.76 125.59 L670.64 123.92 L678.43 122.25 L685.70 120.55 L692.36 118.87 L698.51 117.18 L704.14 115.50 L709.37 113.81 L714.49 112.08 L719.61 110.40 L725.25 108.72 L731.60 107.01 L738.16 105.32 L745.02 103.64 L754.24 102.00 L766.74 100.36" fill="none" stroke="#3c6e3c" stroke-width="1.1"/>
<circle cx="227.04" cy="200.28" r="1.6" fill="#0a3a0a"/>
<circle cx="262.79" cy="198.53" r="1.6" fill="#0a3a0a"/>
<circle cx="288.20" cy="196.78" r="1.6" fill="#0a3a0a"/>
<circle cx="309.00" cy="195.04" r="1.6" fill="#0a3a0a"/>
<circle cx="327.13" cy="193.29" r="1.6" fill="#0a3a0a"/>
<circle cx="343.42" cy="191.55" r="1.6" fill="#0a3a0a"/>
<circle cx="358.27" cy="189.81" r="1.6" fill="#0a3a0a"/>
<circle cx="372.10" cy="188.06" r="1.6" fill="#0a3a0a"/>
<circle cx="385.01" cy="186.32" r="1.6" fill="#0a3a0a"/>
<circle cx="397.31" cy="184.57" r="1.6" fill="#0a3a0a"/>
<circle cx="408.88" cy="182.83" r="1.6" fill="#0a3a0a"/>
<circle cx="420.05" cy="181.08" r="1.6" fill="#0a3a0a"/>
<circle cx="430.60" cy="179.35" r="1.6" fill="#0a3a0a"/>
<circle cx="440.85" cy="177.61" r="1.6" fill="#0a3a0a"/>
<circle cx="450.79" cy="175.85" r="1.6" fill="#0a3a0a"/>
<circle cx="460.31" cy="174.12" r="1.6" fill="#0a3a0a"/>
<circle cx="469.64" cy="172.36" r="1.6" fill="#0a3a0a"/>
<circle cx="478.65" cy="170.62" r="1.6" fill="#0a3a0a"/>
<circle cx="487.36" cy="168.88" r="1.6" fill="#0a3a0a"/>
<circle cx="495.97" cy="167.13" r="1.6" fill="#0a3a0a"/>
<circle cx="504.26" cy="165.39" r="1.6" fill="#0a3a0a"/>
<circle cx="512.36" cy="163.65" r="1.6" fill="#0a3a0a"/>
<circle cx="520.35" cy="161.90" r="1.6" fill="#0a3a0a"/>
<circle cx="528.14" cy="160.16" r="1.6" fill="#0a3a0a"/>
<circle cx="535.82" cy="158.41" r="1.6" fill="#0a3a0a"/>
<circle cx="543.30" cy="156.67" r="1.6" fill="#0a3a0a"/>
<circle cx="550.67" cy="154.92" r="1.6" fill="#0a3a0a"/>
<circle cx="557.85" cy="153.18" r="1.6" fill="#0a3a0a"/>
<circle cx="564.92" cy="151.45" r="1.6" fill="#0a3a0a"/>
<circle cx="571.98" cy="149.68" r="1.6" fill="#0a3a0a"/>
<circle cx="578.85" cy="147.94" r="1.6" fill="#0a3a0a"/>
<circle cx="585.61" cy="146.19" r="1.6" fill="#0a3a0a"/>
<circle cx="592.27" cy="144.45" r="1.6" fill="#0a3a0a"/>
<circle cx="598.83" cy="142.71" r="1.6" fill="#0a3a0a"/>
<circle cx="605.28" cy="140.97" r="1.6" fill="#0a3a0a"/>
<circle cx="611.63" cy="139.24" r="1.6" fill="#0a3a0a"/>
<circle cx="617.98" cy="137.48" r="1.6" fill="#0a3a0a"/>
<circle cx="624.13" cy="135.75" r="1.6" fill="#0a3a0a"/>
<circle cx="630.28" cy="134.04" r="1.6" fill="#0a3a0a"/>
<circle cx="636.43" cy="132.33" r="1.6" fill="#0a3a0a"/>
<circle cx="642.47" cy="130.64" r="1.6" fill="#0a3a0a"/>
<circle cx="648.62" cy="128.96" r="1.6" fill="#0a3a0a"/>
<circle cx="655.38" cy="127.26" r="1.6" fill="#0a3a0a"/>
<circle cx="662.76" cy="125.59" r="1.6" fill="#0a3a0a"/>
<circle cx="670.64" cy="123.92" r="1.6" fill="#0a3a0a"/>
<circle cx="678.43" cy="122.25" r="1.6" fill="#0a3a0a"/>
<circle cx="685.70" cy="120.55" r="1.6" fill="#0a3a0a"/>
<circle cx="692.36" cy="118.87" r="1.6" fill="#0a3a0a"/>
<circle cx="698.51" cy="117.18" r="1.6" fill="#0a3a0a"/>
<circle cx="704.14" cy="115.50" r="1.6" fill="#0a3a0a"/>
<circle cx="709.37" cy="113.81" r="1.6" fill="#0a3a0a"/>
<circle cx="714.49" cy="112.08" r="1.6" fill="#0a3a0a"/>
<circle cx="719.61" cy="110.40" r="1.6" fill="#0a3a0a"/>
<circle cx="725.25" cy="108.72" r="1.6" fill="#0a3a0a"/>
<circle cx="731.60" cy="107.01" r="1.6" fill="#0a3a0a"/>
<circle cx="738.16" cy="105.32" r="1.6" fill="#0a3a0a"/>
<circle cx="745.02" cy="103.64" r="1.6" fill="#0a3a0a"/>
<circle cx="754.24" cy="102.00" r="1.6" fill="#0a3a0a"/>
<circle cx="766.74" cy="100.36" r="1.6" fill="#0a3a0a"/>
</g>
<clipPath id="c2"><rect x="202" y="268.5" width="589.7" height="107.89999999999998"/></clipPath>
<rect x="208.70" y="267.5" width="1" height="108.89999999999998" fill="#f3f3f3"/>
<rect x="208.70" y="376.4" width="1" height="2.5" fill="#d4d4d4"/>
<rect x="219.70" y="267.5" width="1" height="108.89999999999998" fill="#f3f3f3"/>
<rect x="219.70" y="376.4" width="1" height="2.5" fill="#d4d4d4"/>
<rect x="230.69" y="267.5" width="1" height="108.89999999999998" fill="#f3f3f3"/>
<rect x="230.69" y="376.4" width="1" height="2.5" fill="#d4d4d4"/>
<rect x="241.69" y="267.5" width="1" height="108.89999999999998" fill="#f3f3f3"/>
<rect x="241.69" y="376.4" width="1" height="2.5" fill="#d4d4d4"/>
<rect x="252.69" y="267.5" width="1" height="108.89999999999998" fill="#f3f3f3"/>
<rect x="252.69" y="376.4" width="1" height="2.5" fill="#d4d4d4"/>
<rect x="263.68" y="267.5" width="1" height="108.89999999999998" fill="#f3f3f3"/>
<rect x="263.68" y="376.4" width="1" height="2.5" fill="#d4d4d4"/>
<rect x="274.67" y="267.5" width="1" height="108.89999999999998" fill="#f3f3f3"/>
<rect x="274.67" y="376.4" width="1" height="2.5" fill="#d4d4d4"/>
<rect x="285.67" y="267.5" width="1" height="108.89999999999998" fill="#f3f3f3"/>
<rect x="285.67" y="376.4" width="1" height="2.5" fill="#d4d4d4"/>
<rect x="296.66" y="267.5" width="1" height="108.89999999999998" fill="#f3f3f3"/>
<rect x="296.66" y="376.4" width="1" height="2.5" fill="#d4d4d4"/>
<rect x="307.66" y="267.5" width="1" height="108.89999999999998" fill="#f3f3f3"/>
<rect x="307.66" y="376.4" width="1" height="2.5" fill="#d4d4d4"/>
<rect x="318.65" y="267.5" width="1" height="108.89999999999998" fill="#f3f3f3"/>
<rect x="318.65" y="376.4" width="1" height="2.5" fill="#d4d4d4"/>
<rect x="329.65" y="267.5" width="1" height="108.89999999999998" fill="#f3f3f3"/>
<rect x="329.65" y="376.4" width="1" height="2.5" fill="#d4d4d4"/>
<rect x="340.64" y="267.5" width="1" height="108.89999999999998" fill="#f3f3f3"/>
<rect x="340.64" y="376.4" width="1" height="2.5" fill="#d4d4d4"/>
<rect x="351.64" y="267.5" width="1" height="108.89999999999998" fill="#f3f3f3"/>
<rect x="351.64" y="376.4" width="1" height="2.5" fill="#d4d4d4"/>
<rect x="362.63" y="267.5" width="1" height="108.89999999999998" fill="#f3f3f3"/>
<rect x="362.63" y="376.4" width="1" height="2.5" fill="#d4d4d4"/>
<rect x="373.63" y="267.5" width="1" height="108.89999999999998" fill="#f3f3f3"/>
<rect x="373.63" y="376.4" width="1" height="2.5" fill="#d4d4d4"/>
<rect x="384.62" y="267.5" width="1" height="108.89999999999998" fill="#f3f3f3"/>
<rect x="384.62" y="376.4" width="1" height="2.5" fill="#d4d4d4"/>
<rect x="395.62" y="267.5" width="1" height="108.89999999999998" fill="#f3f3f3"/>
<rect x="395.62" y="376.4" width="1" height="2.5" fill="#d4d4d4"/>
<rect x="406.62" y="267.5" width="1" height="108.89999999999998" fill="#f3f3f3"/>
<rect x="406.62" y="376.4" width="1" height="2.5" fill="#d4d4d4"/>
<rect x="417.61" y="267.5" width="1" height="108.89999999999998" fill="#f3f3f3"/>
<rect x="417.61" y="376.4" width="1" height="2.5" fill="#d4d4d4"/>
<rect x="428.61" y="267.5" width="1" height="108.89999999999998" fill="#f3f3f3"/>
<rect x="428.61" y="376.4" width="1" height="2.5" fill="#d4d4d4"/>
<rect x="439.60" y="267.5" width="1" height="108.89999999999998" fill="#f3f3f3"/>
<rect x="439.60" y="376.4" width="1" height="2.5" fill="#d4d4d4"/>
<rect x="450.60" y="267.5" width="1" height="108.89999999999998" fill="#f3f3f3"/>
<rect x="450.60" y="376.4" width="1" height="2.5" fill="#d4d4d4"/>
<rect x="461.59" y="267.5" width="1" height="108.89999999999998" fill="#f3f3f3"/>
<rect x="461.59" y="376.4" width="1" height="2.5" fill="#d4d4d4"/>
<rect x="472.59" y="267.5" width="1" height="108.89999999999998" fill="#f3f3f3"/>
<rect x="472.59" y="376.4" width="1" height="2.5" fill="#d4d4d4"/>
<rect x="483.58" y="267.5" width="1" height="108.89999999999998" fill="#f3f3f3"/>
<rect x="483.58" y="376.4" width="1" height="2.5" fill="#d4d4d4"/>
<rect x="494.58" y="267.5" width="1" height="108.89999999999998" fill="#f3f3f3"/>
<rect x="494.58" y="376.4" width="1" height="2.5" fill="#d4d4d4"/>
<rect x="505.57" y="267.5" width="1" height="108.89999999999998" fill="#f3f3f3"/>
<rect x="505.57" y="376.4" width="1" height="2.5" fill="#d4d4d4"/>
<rect x="516.56" y="267.5" width="1" height="108.89999999999998" fill="#f3f3f3"/>
<rect x="516.56" y="376.4" width="1" height="2.5" fill="#d4d4d4"/>
<rect x="527.56" y="267.5" width="1" height="108.89999999999998" fill="#f3f3f3"/>
<rect x="527.56" y="376.4" width="1" height="2.5" fill="#d4d4d4"/>
<rect x="538.56" y="267.5" width="1" height="108.89999999999998" fill="#f3f3f3"/>
<rect x="538.56" y="376.4" width="1" height="2.5" fill="#d4d4d4"/>
<rect x="549.55" y="267.5" width="1" height="108.89999999999998" fill="#f3f3f3"/>
<rect x="549.55" y="376.4" width="1" height="2.5" fill="#d4d4d4"/>
<rect x="560.55" y="267.5" width="1" height="108.89999999999998" fill="#f3f3f3"/>
<rect x="560.55" y="376.4" width="1" height="2.5" fill="#d4d4d4"/>
<rect x="571.54" y="267.5" width="1" height="108.89999999999998" fill="#f3f3f3"/>
<rect x="571.54" y="376.4" width="1" height="2.5" fill="#d4d4d4"/>
<rect x="582.54" y="267.5" width="1" height="108.89999999999998" fill="#f3f3f3"/>
<rect x="582.54" y="376.4" width="1" height="2.5" fill="#d4d4d4"/>
<rect x="593.53" y="267.5" width="1" height="108.89999999999998" fill="#f3f3f3"/>
<rect x="593.53" y="376.4" width="1" height="2.5" fill="#d4d4d4"/>
<rect x="604.52" y="267.5" width="1" height="108.89999999999998" fill="#f3f3f3"/>
<rect x="604.52" y="376.4" width="1" height="2.5" fill="#d4d4d4"/>
<rect x="615.52" y="267.5" width="1" height="108.89999999999998" fill="#f3f3f3"/>
<rect x="615.52" y="376.4" width="1" height="2.5" fill="#d4d4d4"/>
<rect x="626.51" y="267.5" width="1" height="108.89999999999998" fill="#f3f3f3"/>
<rect x="626.51" y="376.4" width="1" height="2.5" fill="#d4d4d4"/>
<rect x="637.51" y="267.5" width="1" height="108.89999999999998" fill="#f3f3f3"/>
<rect x="637.51" y="376.4" width="1" height="2.5" fill="#d4d4d4"/>
<rect x="648.50" y="267.5" width="1" height="108.89999999999998" fill="#f3f3f3"/>
<rect x="648.50" y="376.4" width="1" height="2.5" fill="#d4d4d4"/>
<rect x="659.50" y="267.5" width="1" height="108.89999999999998" fill="#f3f3f3"/>
<rect x="659.50" y="376.4" width="1" height="2.5" fill="#d4d4d4"/>
<rect x="670.50" y="267.5" width="1" height="108.89999999999998" fill="#f3f3f3"/>
<rect x="670.50" y="376.4" width="1" height="2.5" fill="#d4d4d4"/>
<rect x="681.49" y="267.5" width="1" height="108.89999999999998" fill="#f3f3f3"/>
<rect x="681.49" y="376.4" width="1" height="2.5" fill="#d4d4d4"/>
<rect x="692.49" y="267.5" width="1" height="108.89999999999998" fill="#f3f3f3"/>
<rect x="692.49" y="376.4" width="1" height="2.5" fill="#d4d4d4"/>
<rect x="703.48" y="267.5" width="1" height="108.89999999999998" fill="#f3f3f3"/>
<rect x="703.48" y="376.4" width="1" height="2.5" fill="#d4d4d4"/>
<rect x="714.48" y="267.5" width="1" height="108.89999999999998" fill="#f3f3f3"/>
<rect x="714.48" y="376.4" width="1" height="2.5" fill="#d4d4d4"/>
<rect x="725.47" y="267.5" width="1" height="108.89999999999998" fill="#f3f3f3"/>
<rect x="725.47" y="376.4" width="1" height="2.5" fill="#d4d4d4"/>
<rect x="736.47" y="267.5" width="1" height="108.89999999999998" fill="#f3f3f3"/>
<rect x="736.47" y="376.4" width="1" height="2.5" fill="#d4d4d4"/>
<rect x="747.46" y="267.5" width="1" height="108.89999999999998" fill="#f3f3f3"/>
<rect x="747.46" y="376.4" width="1" height="2.5" fill="#d4d4d4"/>
<rect x="758.46" y="267.5" width="1" height="108.89999999999998" fill="#f3f3f3"/>
<rect x="758.46" y="376.4" width="1" height="2.5" fill="#d4d4d4"/>
<rect x="769.45" y="267.5" width="1" height="108.89999999999998" fill="#f3f3f3"/>
<rect x="769.45" y="376.4" width="1" height="2.5" fill="#d4d4d4"/>
<rect x="780.45" y="267.5" width="1" height="108.89999999999998" fill="#f3f3f3"/>
<rect x="780.45" y="376.4" width="1" height="2.5" fill="#d4d4d4"/>
<rect x="202" y="370.62" width="589.7" height="1" fill="#f3f3f3"/>
<rect x="198" y="370.62" width="4" height="1" fill="#c8c8c8"/>
<rect x="202" y="361.61" width="589.7" height="1" fill="#f3f3f3"/>
<rect x="198" y="361.61" width="4" height="1" fill="#c8c8c8"/>
<rect x="202" y="352.60" width="589.7" height="1" fill="#f3f3f3"/>
<rect x="198" y="352.60" width="4" height="1" fill="#c8c8c8"/>
<rect x="202" y="343.59" width="589.7" height="1" fill="#f3f3f3"/>
<rect x="198" y="343.59" width="4" height="1" fill="#c8c8c8"/>
<rect x="202" y="334.57" width="589.7" height="1" fill="#f3f3f3"/>
<rect x="198" y="334.57" width="4" height="1" fill="#c8c8c8"/>
<rect x="202" y="325.56" width="589.7" height="1" fill="#f3f3f3"/>
<rect x="198" y="325.56" width="4" height="1" fill="#c8c8c8"/>
<rect x="202" y="316.55" width="589.7" height="1" fill="#f3f3f3"/>
<rect x="198" y="316.55" width="4" height="1" fill="#c8c8c8"/>
<rect x="202" y="307.54" width="589.7" height="1" fill="#f3f3f3"/>
<rect x="198" y="307.54" width="4" height="1" fill="#c8c8c8"/>
<rect x="202" y="298.52" width="589.7" height="1" fill="#f3f3f3"/>
<rect x="198" y="298.52" width="4" height="1" fill="#c8c8c8"/>
<rect x="202" y="289.51" width="589.7" height="1" fill="#f3f3f3"/>
<rect x="198" y="289.51" width="4" height="1" fill="#c8c8c8"/>
<rect x="202" y="280.50" width="589.7" height="1" fill="#f3f3f3"/>
<rect x="198" y="280.50" width="4" height="1" fill="#c8c8c8"/>
<rect x="202" y="271.49" width="589.7" height="1" fill="#f3f3f3"/>
<rect x="198" y="271.49" width="4" height="1" fill="#c8c8c8"/>
<rect x="219.55" y="267.5" width="1.3" height="108.89999999999998" fill="#6ee0e0"/>
<rect x="219.60" y="376.4" width="1.2" height="3.5" fill="#8c8c8c"/>
<rect x="263.53" y="267.5" width="1.3" height="108.89999999999998" fill="#6ee0e0"/>
<rect x="263.58" y="376.4" width="1.2" height="3.5" fill="#8c8c8c"/>
<rect x="307.51" y="267.5" width="1.3" height="108.89999999999998" fill="#6ee0e0"/>
<rect x="307.56" y="376.4" width="1.2" height="3.5" fill="#8c8c8c"/>
<rect x="351.49" y="267.5" width="1.3" height="108.89999999999998" fill="#6ee0e0"/>
<rect x="351.54" y="376.4" width="1.2" height="3.5" fill="#8c8c8c"/>
<rect x="395.47" y="267.5" width="1.3" height="108.89999999999998" fill="#6ee0e0"/>
<rect x="395.52" y="376.4" width="1.2" height="3.5" fill="#8c8c8c"/>
<rect x="439.45" y="267.5" width="1.3" height="108.89999999999998" fill="#6ee0e0"/>
<rect x="439.50" y="376.4" width="1.2" height="3.5" fill="#8c8c8c"/>
<rect x="483.43" y="267.5" width="1.3" height="108.89999999999998" fill="#6ee0e0"/>
<rect x="483.48" y="376.4" width="1.2" height="3.5" fill="#8c8c8c"/>
<rect x="527.41" y="267.5" width="1.3" height="108.89999999999998" fill="#6ee0e0"/>
<rect x="527.46" y="376.4" width="1.2" height="3.5" fill="#8c8c8c"/>
<rect x="571.39" y="267.5" width="1.3" height="108.89999999999998" fill="#6ee0e0"/>
<rect x="571.44" y="376.4" width="1.2" height="3.5" fill="#8c8c8c"/>
<rect x="615.37" y="267.5" width="1.3" height="108.89999999999998" fill="#6ee0e0"/>
<rect x="615.42" y="376.4" width="1.2" height="3.5" fill="#8c8c8c"/>
<rect x="659.35" y="267.5" width="1.3" height="108.89999999999998" fill="#6ee0e0"/>
<rect x="659.40" y="376.4" width="1.2" height="3.5" fill="#8c8c8c"/>
<rect x="703.33" y="267.5" width="1.3" height="108.89999999999998" fill="#6ee0e0"/>
<rect x="703.38" y="376.4" width="1.2" height="3.5" fill="#8c8c8c"/>
<rect x="747.31" y="267.5" width="1.3" height="108.89999999999998" fill="#6ee0e0"/>
<rect x="747.36" y="376.4" width="1.2" height="3.5" fill="#8c8c8c"/>
<rect x="791.29" y="267.5" width="1.3" height="108.89999999999998" fill="#6ee0e0"/>
<rect x="791.34" y="376.4" width="1.2" height="3.5" fill="#8c8c8c"/>
<rect x="202" y="352.45" width="589.7" height="1.3" fill="#6ee0e0"/>
<rect x="198" y="352.60" width="4" height="1" fill="#a8d8d8"/>
<rect x="202" y="316.40" width="589.7" height="1.3" fill="#6ee0e0"/>
<rect x="198" y="316.55" width="4" height="1" fill="#a8d8d8"/>
<rect x="202" y="280.35" width="589.7" height="1.3" fill="#6ee0e0"/>
<rect x="198" y="280.50" width="4" height="1" fill="#a8d8d8"/>
<rect x="201.5" y="267.5" width="1" height="108.89999999999998" fill="#c8c8c8"/>
<rect x="790.9000000000001" y="267.5" width="1.4" height="108.89999999999998" fill="#3a6a6a"/>
<rect x="201.5" y="266.8" width="590.7" height="1.5" fill="#404040"/>
<rect x="201.5" y="375.7" width="590.7" height="1.5" fill="#404040"/>
<text x="220.20" y="389.90" font-size="8.6" fill="#202020" text-anchor="middle">0.4</text>
<text x="264.18" y="389.90" font-size="8.6" fill="#202020" text-anchor="middle">0.6</text>
<text x="308.16" y="389.90" font-size="8.6" fill="#202020" text-anchor="middle">0.8</text>
<text x="352.14" y="389.90" font-size="8.6" fill="#202020" text-anchor="middle">1.0</text>
<text x="396.12" y="389.90" font-size="8.6" fill="#202020" text-anchor="middle">1.2</text>
<text x="440.10" y="389.90" font-size="8.6" fill="#202020" text-anchor="middle">1.4</text>
<text x="484.08" y="389.90" font-size="8.6" fill="#202020" text-anchor="middle">1.6</text>
<text x="528.06" y="389.90" font-size="8.6" fill="#202020" text-anchor="middle">1.8</text>
<text x="572.04" y="389.90" font-size="8.6" fill="#202020" text-anchor="middle">2.0</text>
<text x="616.02" y="389.90" font-size="8.6" fill="#202020" text-anchor="middle">2.2</text>
<text x="660.00" y="389.90" font-size="8.6" fill="#202020" text-anchor="middle">2.4</text>
<text x="703.98" y="389.90" font-size="8.6" fill="#202020" text-anchor="middle">2.6</text>
<text x="747.96" y="389.90" font-size="8.6" fill="#202020" text-anchor="middle">2.8</text>
<text x="792.20" y="389.90" font-size="8.6" fill="#202020" text-anchor="end">3.0</text>
<g clip-path="url(#tc376)"><text x="496.85" y="399.90" font-size="8.4" fill="#202020" text-anchor="middle">Time( s )</text></g>
<text x="195.5" y="356.90" font-size="8.6" fill="#202020" text-anchor="end">0.20</text>
<text x="195.5" y="320.85" font-size="8.6" fill="#202020" text-anchor="end">0.40</text>
<text x="195.5" y="284.80" font-size="8.6" fill="#202020" text-anchor="end">0.60</text>
<g clip-path="url(#c2)">
<path d="M231.74 369.28 L259.01 363.86 L281.33 359.45 L300.79 355.63 L318.28 352.22 L334.22 349.13 L349.06 346.27 L362.92 343.61 L376.11 341.09 L388.53 338.72 L400.52 336.45 L411.84 334.31 L422.84 332.24 L433.50 330.24 L443.73 328.33 L453.73 326.47 L463.41 324.68 L472.76 322.95 L481.99 321.25 L490.90 319.61 L499.58 318.02 L508.16 316.45 L516.52 314.93 L524.76 313.43 L532.79 311.98 L540.70 310.55 L548.40 309.17 L555.99 307.81 L563.57 306.45 L570.94 305.13 L578.20 303.84 L585.34 302.57 L592.38 301.32 L599.31 300.10 L606.12 298.90 L612.94 297.70 L619.54 296.54 L630.09 294.34 L636.69 296.50 L643.51 304.61 L650.98 312.90 L658.90 317.41 L667.04 316.51 L674.07 310.92 L681.55 304.07 L689.03 297.04 L696.50 287.31 L702.22 279.20 L705.96 274.33 L711.90 277.39 L717.17 285.51 L723.99 298.48 L730.37 301.91 L737.40 300.83 L750.60 335.98" fill="none" stroke="#28285a" stroke-width="1.1"/>
<circle cx="231.74" cy="369.28" r="1.5" fill="#000030"/>
<circle cx="259.01" cy="363.86" r="1.5" fill="#000030"/>
<circle cx="281.33" cy="359.45" r="1.5" fill="#000030"/>
<circle cx="300.79" cy="355.63" r="1.5" fill="#000030"/>
<circle cx="318.28" cy="352.22" r="1.5" fill="#000030"/>
<circle cx="334.22" cy="349.13" r="1.5" fill="#000030"/>
<circle cx="349.06" cy="346.27" r="1.5" fill="#000030"/>
<circle cx="362.92" cy="343.61" r="1.5" fill="#000030"/>
<circle cx="376.11" cy="341.09" r="1.5" fill="#000030"/>
<circle cx="388.53" cy="338.72" r="1.5" fill="#000030"/>
<circle cx="400.52" cy="336.45" r="1.5" fill="#000030"/>
<circle cx="411.84" cy="334.31" r="1.5" fill="#000030"/>
<circle cx="422.84" cy="332.24" r="1.5" fill="#000030"/>
<circle cx="433.50" cy="330.24" r="1.5" fill="#000030"/>
<circle cx="443.73" cy="328.33" r="1.5" fill="#000030"/>
<circle cx="453.73" cy="326.47" r="1.5" fill="#000030"/>
<circle cx="463.41" cy="324.68" r="1.5" fill="#000030"/>
<circle cx="472.76" cy="322.95" r="1.5" fill="#000030"/>
<circle cx="481.99" cy="321.25" r="1.5" fill="#000030"/>
<circle cx="490.90" cy="319.61" r="1.5" fill="#000030"/>
<circle cx="499.58" cy="318.02" r="1.5" fill="#000030"/>
<circle cx="508.16" cy="316.45" r="1.5" fill="#000030"/>
<circle cx="516.52" cy="314.93" r="1.5" fill="#000030"/>
<circle cx="524.76" cy="313.43" r="1.5" fill="#000030"/>
<circle cx="532.79" cy="311.98" r="1.5" fill="#000030"/>
<circle cx="540.70" cy="310.55" r="1.5" fill="#000030"/>
<circle cx="548.40" cy="309.17" r="1.5" fill="#000030"/>
<circle cx="555.99" cy="307.81" r="1.5" fill="#000030"/>
<circle cx="563.57" cy="306.45" r="1.5" fill="#000030"/>
<circle cx="570.94" cy="305.13" r="1.5" fill="#000030"/>
<circle cx="578.20" cy="303.84" r="1.5" fill="#000030"/>
<circle cx="585.34" cy="302.57" r="1.5" fill="#000030"/>
<circle cx="592.38" cy="301.32" r="1.5" fill="#000030"/>
<circle cx="599.31" cy="300.10" r="1.5" fill="#000030"/>
<circle cx="606.12" cy="298.90" r="1.5" fill="#000030"/>
<circle cx="612.94" cy="297.70" r="1.5" fill="#000030"/>
<circle cx="619.54" cy="296.54" r="1.5" fill="#000030"/>
<circle cx="630.09" cy="294.34" r="1.5" fill="#000030"/>
<circle cx="636.69" cy="296.50" r="1.5" fill="#000030"/>
<circle cx="643.51" cy="304.61" r="1.5" fill="#000030"/>
<circle cx="650.98" cy="312.90" r="1.5" fill="#000030"/>
<circle cx="658.90" cy="317.41" r="1.5" fill="#000030"/>
<circle cx="667.04" cy="316.51" r="1.5" fill="#000030"/>
<circle cx="674.07" cy="310.92" r="1.5" fill="#000030"/>
<circle cx="681.55" cy="304.07" r="1.5" fill="#000030"/>
<circle cx="689.03" cy="297.04" r="1.5" fill="#000030"/>
<circle cx="696.50" cy="287.31" r="1.5" fill="#000030"/>
<circle cx="702.22" cy="279.20" r="1.5" fill="#000030"/>
<circle cx="705.96" cy="274.33" r="1.5" fill="#000030"/>
<circle cx="711.90" cy="277.39" r="1.5" fill="#000030"/>
<circle cx="717.17" cy="285.51" r="1.5" fill="#000030"/>
<circle cx="723.99" cy="298.48" r="1.5" fill="#000030"/>
<circle cx="730.37" cy="301.91" r="1.5" fill="#000030"/>
<circle cx="737.40" cy="300.83" r="1.5" fill="#000030"/>
<circle cx="750.60" cy="335.98" r="1.5" fill="#000030"/>
</g>
<clipPath id="c3"><rect x="199.9" y="434.7" width="591.8000000000001" height="109.50000000000006"/></clipPath>
<rect x="202.80" y="433.7" width="1" height="110.50000000000006" fill="#f3f3f3"/>
<rect x="202.80" y="544.2" width="1" height="2.5" fill="#d4d4d4"/>
<rect x="214.11" y="433.7" width="1" height="110.50000000000006" fill="#f3f3f3"/>
<rect x="214.11" y="544.2" width="1" height="2.5" fill="#d4d4d4"/>
<rect x="225.42" y="433.7" width="1" height="110.50000000000006" fill="#f3f3f3"/>
<rect x="225.42" y="544.2" width="1" height="2.5" fill="#d4d4d4"/>
<rect x="236.73" y="433.7" width="1" height="110.50000000000006" fill="#f3f3f3"/>
<rect x="236.73" y="544.2" width="1" height="2.5" fill="#d4d4d4"/>
<rect x="248.04" y="433.7" width="1" height="110.50000000000006" fill="#f3f3f3"/>
<rect x="248.04" y="544.2" width="1" height="2.5" fill="#d4d4d4"/>
<rect x="259.35" y="433.7" width="1" height="110.50000000000006" fill="#f3f3f3"/>
<rect x="259.35" y="544.2" width="1" height="2.5" fill="#d4d4d4"/>
<rect x="270.66" y="433.7" width="1" height="110.50000000000006" fill="#f3f3f3"/>
<rect x="270.66" y="544.2" width="1" height="2.5" fill="#d4d4d4"/>
<rect x="281.97" y="433.7" width="1" height="110.50000000000006" fill="#f3f3f3"/>
<rect x="281.97" y="544.2" width="1" height="2.5" fill="#d4d4d4"/>
<rect x="293.28" y="433.7" width="1" height="110.50000000000006" fill="#f3f3f3"/>
<rect x="293.28" y="544.2" width="1" height="2.5" fill="#d4d4d4"/>
<rect x="304.59" y="433.7" width="1" height="110.50000000000006" fill="#f3f3f3"/>
<rect x="304.59" y="544.2" width="1" height="2.5" fill="#d4d4d4"/>
<rect x="315.90" y="433.7" width="1" height="110.50000000000006" fill="#f3f3f3"/>
<rect x="315.90" y="544.2" width="1" height="2.5" fill="#d4d4d4"/>
<rect x="327.21" y="433.7" width="1" height="110.50000000000006" fill="#f3f3f3"/>
<rect x="327.21" y="544.2" width="1" height="2.5" fill="#d4d4d4"/>
<rect x="338.52" y="433.7" width="1" height="110.50000000000006" fill="#f3f3f3"/>
<rect x="338.52" y="544.2" width="1" height="2.5" fill="#d4d4d4"/>
<rect x="349.83" y="433.7" width="1" height="110.50000000000006" fill="#f3f3f3"/>
<rect x="349.83" y="544.2" width="1" height="2.5" fill="#d4d4d4"/>
<rect x="361.14" y="433.7" width="1" height="110.50000000000006" fill="#f3f3f3"/>
<rect x="361.14" y="544.2" width="1" height="2.5" fill="#d4d4d4"/>
<rect x="372.45" y="433.7" width="1" height="110.50000000000006" fill="#f3f3f3"/>
<rect x="372.45" y="544.2" width="1" height="2.5" fill="#d4d4d4"/>
<rect x="383.76" y="433.7" width="1" height="110.50000000000006" fill="#f3f3f3"/>
<rect x="383.76" y="544.2" width="1" height="2.5" fill="#d4d4d4"/>
<rect x="395.07" y="433.7" width="1" height="110.50000000000006" fill="#f3f3f3"/>
<rect x="395.07" y="544.2" width="1" height="2.5" fill="#d4d4d4"/>
<rect x="406.38" y="433.7" width="1" height="110.50000000000006" fill="#f3f3f3"/>
<rect x="406.38" y="544.2" width="1" height="2.5" fill="#d4d4d4"/>
<rect x="417.69" y="433.7" width="1" height="110.50000000000006" fill="#f3f3f3"/>
<rect x="417.69" y="544.2" width="1" height="2.5" fill="#d4d4d4"/>
<rect x="429.00" y="433.7" width="1" height="110.50000000000006" fill="#f3f3f3"/>
<rect x="429.00" y="544.2" width="1" height="2.5" fill="#d4d4d4"/>
<rect x="440.31" y="433.7" width="1" height="110.50000000000006" fill="#f3f3f3"/>
<rect x="440.31" y="544.2" width="1" height="2.5" fill="#d4d4d4"/>
<rect x="451.62" y="433.7" width="1" height="110.50000000000006" fill="#f3f3f3"/>
<rect x="451.62" y="544.2" width="1" height="2.5" fill="#d4d4d4"/>
<rect x="462.93" y="433.7" width="1" height="110.50000000000006" fill="#f3f3f3"/>
<rect x="462.93" y="544.2" width="1" height="2.5" fill="#d4d4d4"/>
<rect x="474.24" y="433.7" width="1" height="110.50000000000006" fill="#f3f3f3"/>
<rect x="474.24" y="544.2" width="1" height="2.5" fill="#d4d4d4"/>
<rect x="485.55" y="433.7" width="1" height="110.50000000000006" fill="#f3f3f3"/>
<rect x="485.55" y="544.2" width="1" height="2.5" fill="#d4d4d4"/>
<rect x="496.86" y="433.7" width="1" height="110.50000000000006" fill="#f3f3f3"/>
<rect x="496.86" y="544.2" width="1" height="2.5" fill="#d4d4d4"/>
<rect x="508.17" y="433.7" width="1" height="110.50000000000006" fill="#f3f3f3"/>
<rect x="508.17" y="544.2" width="1" height="2.5" fill="#d4d4d4"/>
<rect x="519.48" y="433.7" width="1" height="110.50000000000006" fill="#f3f3f3"/>
<rect x="519.48" y="544.2" width="1" height="2.5" fill="#d4d4d4"/>
<rect x="530.79" y="433.7" width="1" height="110.50000000000006" fill="#f3f3f3"/>
<rect x="530.79" y="544.2" width="1" height="2.5" fill="#d4d4d4"/>
<rect x="542.10" y="433.7" width="1" height="110.50000000000006" fill="#f3f3f3"/>
<rect x="542.10" y="544.2" width="1" height="2.5" fill="#d4d4d4"/>
<rect x="553.41" y="433.7" width="1" height="110.50000000000006" fill="#f3f3f3"/>
<rect x="553.41" y="544.2" width="1" height="2.5" fill="#d4d4d4"/>
<rect x="564.72" y="433.7" width="1" height="110.50000000000006" fill="#f3f3f3"/>
<rect x="564.72" y="544.2" width="1" height="2.5" fill="#d4d4d4"/>
<rect x="576.03" y="433.7" width="1" height="110.50000000000006" fill="#f3f3f3"/>
<rect x="576.03" y="544.2" width="1" height="2.5" fill="#d4d4d4"/>
<rect x="587.34" y="433.7" width="1" height="110.50000000000006" fill="#f3f3f3"/>
<rect x="587.34" y="544.2" width="1" height="2.5" fill="#d4d4d4"/>
<rect x="598.65" y="433.7" width="1" height="110.50000000000006" fill="#f3f3f3"/>
<rect x="598.65" y="544.2" width="1" height="2.5" fill="#d4d4d4"/>
<rect x="609.96" y="433.7" width="1" height="110.50000000000006" fill="#f3f3f3"/>
<rect x="609.96" y="544.2" width="1" height="2.5" fill="#d4d4d4"/>
<rect x="621.27" y="433.7" width="1" height="110.50000000000006" fill="#f3f3f3"/>
<rect x="621.27" y="544.2" width="1" height="2.5" fill="#d4d4d4"/>
<rect x="632.58" y="433.7" width="1" height="110.50000000000006" fill="#f3f3f3"/>
<rect x="632.58" y="544.2" width="1" height="2.5" fill="#d4d4d4"/>
<rect x="643.89" y="433.7" width="1" height="110.50000000000006" fill="#f3f3f3"/>
<rect x="643.89" y="544.2" width="1" height="2.5" fill="#d4d4d4"/>
<rect x="655.20" y="433.7" width="1" height="110.50000000000006" fill="#f3f3f3"/>
<rect x="655.20" y="544.2" width="1" height="2.5" fill="#d4d4d4"/>
<rect x="666.51" y="433.7" width="1" height="110.50000000000006" fill="#f3f3f3"/>
<rect x="666.51" y="544.2" width="1" height="2.5" fill="#d4d4d4"/>
<rect x="677.82" y="433.7" width="1" height="110.50000000000006" fill="#f3f3f3"/>
<rect x="677.82" y="544.2" width="1" height="2.5" fill="#d4d4d4"/>
<rect x="689.13" y="433.7" width="1" height="110.50000000000006" fill="#f3f3f3"/>
<rect x="689.13" y="544.2" width="1" height="2.5" fill="#d4d4d4"/>
<rect x="700.44" y="433.7" width="1" height="110.50000000000006" fill="#f3f3f3"/>
<rect x="700.44" y="544.2" width="1" height="2.5" fill="#d4d4d4"/>
<rect x="711.75" y="433.7" width="1" height="110.50000000000006" fill="#f3f3f3"/>
<rect x="711.75" y="544.2" width="1" height="2.5" fill="#d4d4d4"/>
<rect x="723.06" y="433.7" width="1" height="110.50000000000006" fill="#f3f3f3"/>
<rect x="723.06" y="544.2" width="1" height="2.5" fill="#d4d4d4"/>
<rect x="734.37" y="433.7" width="1" height="110.50000000000006" fill="#f3f3f3"/>
<rect x="734.37" y="544.2" width="1" height="2.5" fill="#d4d4d4"/>
<rect x="745.68" y="433.7" width="1" height="110.50000000000006" fill="#f3f3f3"/>
<rect x="745.68" y="544.2" width="1" height="2.5" fill="#d4d4d4"/>
<rect x="756.99" y="433.7" width="1" height="110.50000000000006" fill="#f3f3f3"/>
<rect x="756.99" y="544.2" width="1" height="2.5" fill="#d4d4d4"/>
<rect x="768.30" y="433.7" width="1" height="110.50000000000006" fill="#f3f3f3"/>
<rect x="768.30" y="544.2" width="1" height="2.5" fill="#d4d4d4"/>
<rect x="779.61" y="433.7" width="1" height="110.50000000000006" fill="#f3f3f3"/>
<rect x="779.61" y="544.2" width="1" height="2.5" fill="#d4d4d4"/>
<rect x="790.92" y="544.2" width="1" height="2.5" fill="#d4d4d4"/>
<rect x="199.9" y="538.42" width="591.8000000000001" height="1" fill="#f3f3f3"/>
<rect x="195.9" y="538.42" width="4" height="1" fill="#c8c8c8"/>
<rect x="199.9" y="531.64" width="591.8000000000001" height="1" fill="#f3f3f3"/>
<rect x="195.9" y="531.64" width="4" height="1" fill="#c8c8c8"/>
<rect x="199.9" y="524.86" width="591.8000000000001" height="1" fill="#f3f3f3"/>
<rect x="195.9" y="524.86" width="4" height="1" fill="#c8c8c8"/>
<rect x="199.9" y="518.08" width="591.8000000000001" height="1" fill="#f3f3f3"/>
<rect x="195.9" y="518.08" width="4" height="1" fill="#c8c8c8"/>
<rect x="199.9" y="511.30" width="591.8000000000001" height="1" fill="#f3f3f3"/>
<rect x="195.9" y="511.30" width="4" height="1" fill="#c8c8c8"/>
<rect x="199.9" y="504.52" width="591.8000000000001" height="1" fill="#f3f3f3"/>
<rect x="195.9" y="504.52" width="4" height="1" fill="#c8c8c8"/>
<rect x="199.9" y="497.74" width="591.8000000000001" height="1" fill="#f3f3f3"/>
<rect x="195.9" y="497.74" width="4" height="1" fill="#c8c8c8"/>
<rect x="199.9" y="490.96" width="591.8000000000001" height="1" fill="#f3f3f3"/>
<rect x="195.9" y="490.96" width="4" height="1" fill="#c8c8c8"/>
<rect x="199.9" y="484.18" width="591.8000000000001" height="1" fill="#f3f3f3"/>
<rect x="195.9" y="484.18" width="4" height="1" fill="#c8c8c8"/>
<rect x="199.9" y="477.40" width="591.8000000000001" height="1" fill="#f3f3f3"/>
<rect x="195.9" y="477.40" width="4" height="1" fill="#c8c8c8"/>
<rect x="199.9" y="470.62" width="591.8000000000001" height="1" fill="#f3f3f3"/>
<rect x="195.9" y="470.62" width="4" height="1" fill="#c8c8c8"/>
<rect x="199.9" y="463.84" width="591.8000000000001" height="1" fill="#f3f3f3"/>
<rect x="195.9" y="463.84" width="4" height="1" fill="#c8c8c8"/>
<rect x="199.9" y="457.06" width="591.8000000000001" height="1" fill="#f3f3f3"/>
<rect x="195.9" y="457.06" width="4" height="1" fill="#c8c8c8"/>
<rect x="199.9" y="450.28" width="591.8000000000001" height="1" fill="#f3f3f3"/>
<rect x="195.9" y="450.28" width="4" height="1" fill="#c8c8c8"/>
<rect x="199.9" y="443.50" width="591.8000000000001" height="1" fill="#f3f3f3"/>
<rect x="195.9" y="443.50" width="4" height="1" fill="#c8c8c8"/>
<rect x="199.9" y="436.72" width="591.8000000000001" height="1" fill="#f3f3f3"/>
<rect x="195.9" y="436.72" width="4" height="1" fill="#c8c8c8"/>
<rect x="202.65" y="433.7" width="1.3" height="110.50000000000006" fill="#6ee0e0"/>
<rect x="202.70" y="544.2" width="1.2" height="3.5" fill="#8c8c8c"/>
<rect x="247.89" y="433.7" width="1.3" height="110.50000000000006" fill="#6ee0e0"/>
<rect x="247.94" y="544.2" width="1.2" height="3.5" fill="#8c8c8c"/>
<rect x="293.13" y="433.7" width="1.3" height="110.50000000000006" fill="#6ee0e0"/>
<rect x="293.18" y="544.2" width="1.2" height="3.5" fill="#8c8c8c"/>
<rect x="338.37" y="433.7" width="1.3" height="110.50000000000006" fill="#6ee0e0"/>
<rect x="338.42" y="544.2" width="1.2" height="3.5" fill="#8c8c8c"/>
<rect x="383.61" y="433.7" width="1.3" height="110.50000000000006" fill="#6ee0e0"/>
<rect x="383.66" y="544.2" width="1.2" height="3.5" fill="#8c8c8c"/>
<rect x="428.85" y="433.7" width="1.3" height="110.50000000000006" fill="#6ee0e0"/>
<rect x="428.90" y="544.2" width="1.2" height="3.5" fill="#8c8c8c"/>
<rect x="474.09" y="433.7" width="1.3" height="110.50000000000006" fill="#6ee0e0"/>
<rect x="474.14" y="544.2" width="1.2" height="3.5" fill="#8c8c8c"/>
<rect x="519.33" y="433.7" width="1.3" height="110.50000000000006" fill="#6ee0e0"/>
<rect x="519.38" y="544.2" width="1.2" height="3.5" fill="#8c8c8c"/>
<rect x="564.57" y="433.7" width="1.3" height="110.50000000000006" fill="#6ee0e0"/>
<rect x="564.62" y="544.2" width="1.2" height="3.5" fill="#8c8c8c"/>
<rect x="609.81" y="433.7" width="1.3" height="110.50000000000006" fill="#6ee0e0"/>
<rect x="609.86" y="544.2" width="1.2" height="3.5" fill="#8c8c8c"/>
<rect x="655.05" y="433.7" width="1.3" height="110.50000000000006" fill="#6ee0e0"/>
<rect x="655.10" y="544.2" width="1.2" height="3.5" fill="#8c8c8c"/>
<rect x="700.29" y="433.7" width="1.3" height="110.50000000000006" fill="#6ee0e0"/>
<rect x="700.34" y="544.2" width="1.2" height="3.5" fill="#8c8c8c"/>
<rect x="745.53" y="433.7" width="1.3" height="110.50000000000006" fill="#6ee0e0"/>
<rect x="745.58" y="544.2" width="1.2" height="3.5" fill="#8c8c8c"/>
<rect x="790.77" y="433.7" width="1.3" height="110.50000000000006" fill="#6ee0e0"/>
<rect x="790.82" y="544.2" width="1.2" height="3.5" fill="#8c8c8c"/>
<rect x="199.9" y="443.35" width="591.8000000000001" height="1.3" fill="#6ee0e0"/>
<rect x="195.9" y="443.50" width="4" height="1" fill="#a8d8d8"/>
<rect x="199.9" y="477.25" width="591.8000000000001" height="1.3" fill="#6ee0e0"/>
<rect x="195.9" y="477.40" width="4" height="1" fill="#a8d8d8"/>
<rect x="199.9" y="511.15" width="591.8000000000001" height="1.3" fill="#6ee0e0"/>
<rect x="195.9" y="511.30" width="4" height="1" fill="#a8d8d8"/>
<rect x="199.9" y="477.20" width="591.8000000000001" height="1.4" fill="#3c3c3c"/>
<rect x="199.4" y="433.7" width="1" height="110.50000000000006" fill="#c8c8c8"/>
<rect x="790.9000000000001" y="433.7" width="1.4" height="110.50000000000006" fill="#3a6a6a"/>
<rect x="199.4" y="433.0" width="592.8000000000001" height="1.5" fill="#404040"/>
<rect x="199.4" y="543.5" width="592.8000000000001" height="1.5" fill="#404040"/>
<text x="203.30" y="557.70" font-size="8.6" fill="#202020" text-anchor="middle">0.4</text>
<text x="248.54" y="557.70" font-size="8.6" fill="#202020" text-anchor="middle">0.6</text>
<text x="293.78" y="557.70" font-size="8.6" fill="#202020" text-anchor="middle">0.8</text>
<text x="339.02" y="557.70" font-size="8.6" fill="#202020" text-anchor="middle">1.0</text>
<text x="384.26" y="557.70" font-size="8.6" fill="#202020" text-anchor="middle">1.2</text>
<text x="429.50" y="557.70" font-size="8.6" fill="#202020" text-anchor="middle">1.4</text>
<text x="474.74" y="557.70" font-size="8.6" fill="#202020" text-anchor="middle">1.6</text>
<text x="519.98" y="557.70" font-size="8.6" fill="#202020" text-anchor="middle">1.8</text>
<text x="565.22" y="557.70" font-size="8.6" fill="#202020" text-anchor="middle">2.0</text>
<text x="610.46" y="557.70" font-size="8.6" fill="#202020" text-anchor="middle">2.2</text>
<text x="655.70" y="557.70" font-size="8.6" fill="#202020" text-anchor="middle">2.4</text>
<text x="700.94" y="557.70" font-size="8.6" fill="#202020" text-anchor="middle">2.6</text>
<text x="746.18" y="557.70" font-size="8.6" fill="#202020" text-anchor="middle">2.8</text>
<text x="792.20" y="557.70" font-size="8.6" fill="#202020" text-anchor="end">3.0</text>
<g clip-path="url(#tc544)"><text x="495.80" y="567.70" font-size="8.4" fill="#202020" text-anchor="middle">Time( s )</text></g>
<text x="193" y="447.80" font-size="8.6" fill="#202020" text-anchor="end">1.0</text>
<text x="193" y="481.70" font-size="8.6" fill="#202020" text-anchor="end">0.0</text>
<text x="193" y="515.60" font-size="8.6" fill="#202020" text-anchor="end">-1.0</text>
<text x="193" y="542.30" font-size="8.6" fill="#202020" text-anchor="end">-2.0</text>
<g clip-path="url(#c3)">
<path d="M230.78 469.59 L253.74 469.59 L273.76 469.59 L291.74 469.93 L308.14 469.59 L323.41 469.59 L337.66 470.27 L351.23 469.93 L364.02 469.59 L376.34 470.61 L387.99 469.59 L399.30 469.93 L410.27 470.27 L420.79 469.59 L431.08 469.93 L441.04 470.27 L450.65 469.59 L460.15 469.93 L469.31 469.59 L478.25 470.27 L487.07 469.59 L495.66 469.59 L504.15 469.59 L512.40 469.93 L520.55 469.59 L528.46 469.59 L536.27 470.27 L544.07 469.93 L551.65 469.59 L559.11 470.61 L566.46 469.59 L573.70 469.93 L580.83 470.27 L587.84 469.59 L594.85 469.93 L601.64 470.27 L608.42 469.59 L615.21 469.93 L622.22 470.68 L629.23 490.75 L636.02 520.11 L643.71 526.38 L651.40 502.55 L659.77 469.66 L667.69 449.02 L675.83 438.68 L689.63 428.75 L700.94 410.10 L707.27 495.97 L716.77 566.04 L725.82 497.90 L732.61 473.15 L743.92 572.82" fill="none" stroke="#c040c0" stroke-width="1.1"/>
<circle cx="230.78" cy="469.59" r="1.6" fill="#c020c0"/>
<circle cx="253.74" cy="469.59" r="1.6" fill="#c020c0"/>
<circle cx="273.76" cy="469.59" r="1.6" fill="#c020c0"/>
<circle cx="291.74" cy="469.93" r="1.6" fill="#c020c0"/>
<circle cx="308.14" cy="469.59" r="1.6" fill="#c020c0"/>
<circle cx="323.41" cy="469.59" r="1.6" fill="#c020c0"/>
<circle cx="337.66" cy="470.27" r="1.6" fill="#c020c0"/>
<circle cx="351.23" cy="469.93" r="1.6" fill="#c020c0"/>
<circle cx="364.02" cy="469.59" r="1.6" fill="#c020c0"/>
<circle cx="376.34" cy="470.61" r="1.6" fill="#c020c0"/>
<circle cx="387.99" cy="469.59" r="1.6" fill="#c020c0"/>
<circle cx="399.30" cy="469.93" r="1.6" fill="#c020c0"/>
<circle cx="410.27" cy="470.27" r="1.6" fill="#c020c0"/>
<circle cx="420.79" cy="469.59" r="1.6" fill="#c020c0"/>
<circle cx="431.08" cy="469.93" r="1.6" fill="#c020c0"/>
<circle cx="441.04" cy="470.27" r="1.6" fill="#c020c0"/>
<circle cx="450.65" cy="469.59" r="1.6" fill="#c020c0"/>
<circle cx="460.15" cy="469.93" r="1.6" fill="#c020c0"/>
<circle cx="469.31" cy="469.59" r="1.6" fill="#c020c0"/>
<circle cx="478.25" cy="470.27" r="1.6" fill="#c020c0"/>
<circle cx="487.07" cy="469.59" r="1.6" fill="#c020c0"/>
<circle cx="495.66" cy="469.59" r="1.6" fill="#c020c0"/>
<circle cx="504.15" cy="469.59" r="1.6" fill="#c020c0"/>
<circle cx="512.40" cy="469.93" r="1.6" fill="#c020c0"/>
<circle cx="520.55" cy="469.59" r="1.6" fill="#c020c0"/>
<circle cx="528.46" cy="469.59" r="1.6" fill="#c020c0"/>
<circle cx="536.27" cy="470.27" r="1.6" fill="#c020c0"/>
<circle cx="544.07" cy="469.93" r="1.6" fill="#c020c0"/>
<circle cx="551.65" cy="469.59" r="1.6" fill="#c020c0"/>
<circle cx="559.11" cy="470.61" r="1.6" fill="#c020c0"/>
<circle cx="566.46" cy="469.59" r="1.6" fill="#c020c0"/>
<circle cx="573.70" cy="469.93" r="1.6" fill="#c020c0"/>
<circle cx="580.83" cy="470.27" r="1.6" fill="#c020c0"/>
<circle cx="587.84" cy="469.59" r="1.6" fill="#c020c0"/>
<circle cx="594.85" cy="469.93" r="1.6" fill="#c020c0"/>
<circle cx="601.64" cy="470.27" r="1.6" fill="#c020c0"/>
<circle cx="608.42" cy="469.59" r="1.6" fill="#c020c0"/>
<circle cx="615.21" cy="469.93" r="1.6" fill="#c020c0"/>
<circle cx="622.22" cy="470.68" r="1.6" fill="#c020c0"/>
<circle cx="629.23" cy="490.75" r="1.6" fill="#c020c0"/>
<circle cx="636.02" cy="520.11" r="1.6" fill="#c020c0"/>
<circle cx="643.71" cy="526.38" r="1.6" fill="#c020c0"/>
<circle cx="651.40" cy="502.55" r="1.6" fill="#c020c0"/>
<circle cx="659.77" cy="469.66" r="1.6" fill="#c020c0"/>
<circle cx="667.69" cy="449.02" r="1.6" fill="#c020c0"/>
<circle cx="675.83" cy="438.68" r="1.6" fill="#c020c0"/>
<circle cx="689.63" cy="428.75" r="1.6" fill="#c020c0"/>
<circle cx="700.94" cy="410.10" r="1.6" fill="#c020c0"/>
<circle cx="707.27" cy="495.97" r="1.6" fill="#c020c0"/>
<circle cx="716.77" cy="566.04" r="1.6" fill="#c020c0"/>
<circle cx="725.82" cy="497.90" r="1.6" fill="#c020c0"/>
<circle cx="732.61" cy="473.15" r="1.6" fill="#c020c0"/>
<circle cx="743.92" cy="572.82" r="1.6" fill="#c020c0"/>
</g>
<text x="175.3" y="157.1" font-size="9.5" fill="#2f6a2f" text-anchor="middle" transform="rotate(-90 175.3 157.1)">Position( m )</text>
<text x="175.5" y="327.2" font-size="9.5" fill="#2a2a6a" text-anchor="middle" transform="rotate(-90 175.5 327.2)">Velocity( m/s )</text>
<text x="175.5" y="491.6" font-size="9.5" fill="#c030c0" text-anchor="middle" transform="rotate(-90 175.5 491.6)">Acceleration( m/s/s )</text>
<path d="M169.5 121.4 L174.7 126.6 M174.7 121.4 L169.5 126.6" stroke="#0a4a0a" stroke-width="3.0" stroke-linecap="round"/>
<path d="M172.3 286 V294 M168.82 288.0 L175.78 292.0 M175.78 288.0 L168.82 292.0" stroke="#000050" stroke-width="1.8"/>
<polygon points="172.90,436.50 173.96,439.34 176.99,439.47 174.61,441.36 175.43,444.28 172.90,442.60 170.37,444.28 171.19,441.36 168.81,439.47 171.84,439.34" fill="#d020d0"/>
<rect x="678.5" y="104.0" width="53" height="16" fill="#fff" stroke="#505050" stroke-width="1"/>
<rect x="679" y="119.5" width="53" height="1" fill="#808080"/><rect x="731" y="104.5" width="1" height="16" fill="#808080"/>
<path d="M683.9 109.4 L689.1 114.6 M689.1 109.4 L683.9 114.6" stroke="#0a4a0a" stroke-width="3.0" stroke-linecap="round"/>
<text x="694.5" y="115.2" font-size="8.6" fill="#2f5a2f">Run #3</text>
<rect x="679.5" y="277.5" width="53" height="16.5" fill="#fff" stroke="#505050" stroke-width="1"/>
<rect x="680" y="293.5" width="53" height="1" fill="#808080"/><rect x="732" y="278" width="1" height="16.5" fill="#808080"/>
<path d="M687 281.75 V289.75 M683.52 283.75 L690.48 287.75 M690.48 283.75 L683.52 287.75" stroke="#000050" stroke-width="1.8"/>
<text x="695.5" y="288.95" font-size="8.6" fill="#202050">Run #3</text>
<rect x="680.5" y="444.5" width="52.5" height="16" fill="#fff" stroke="#505050" stroke-width="1"/>
<rect x="681" y="460" width="52.5" height="1" fill="#808080"/><rect x="732.5" y="445" width="1" height="16" fill="#808080"/>
<polygon points="688.00,448.20 689.06,451.04 692.09,451.17 689.71,453.06 690.53,455.98 688.00,454.30 685.47,455.98 686.29,453.06 683.91,451.17 686.94,451.04" fill="#c020c0"/>
<text x="696.5" y="455.7" font-size="8.6" fill="#b020b0">Run #3</text>
</svg></body></html>
